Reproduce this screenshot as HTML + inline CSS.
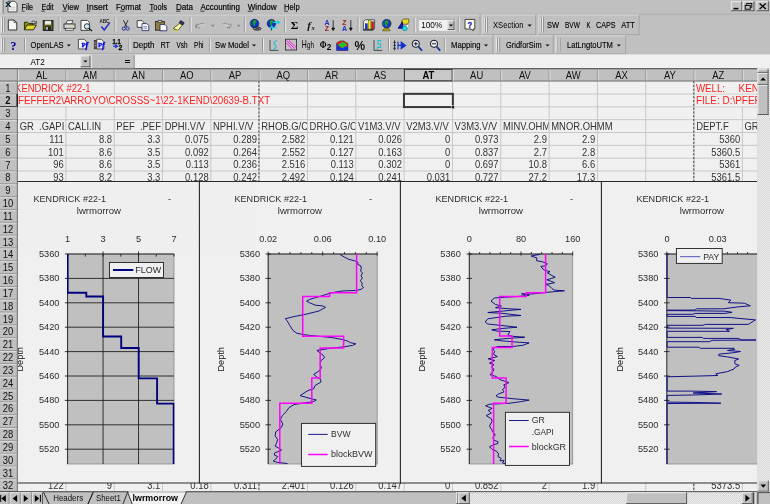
<!DOCTYPE html>
<html><head><meta charset="utf-8"><title>Microsoft Excel - lwrmorrow</title>
<style>
html,body{margin:0;padding:0;background:#c0c0c0;overflow:hidden}
svg{display:block;font-family:"Liberation Sans",sans-serif;will-change:transform;opacity:0.999}
</style></head><body>
<svg width="770" height="504" viewBox="0 0 770 504">
<rect x="0.00" y="0.00" width="770.00" height="504.00" fill="#c0c0c0"/>
<rect x="0.00" y="68.60" width="757.30" height="423.00" fill="#f0f0f0"/>
<line x1="65.92" y1="81.00" x2="65.92" y2="491.50" stroke="#c8c8c8" stroke-width="1"/>
<line x1="114.24" y1="81.00" x2="114.24" y2="491.50" stroke="#c8c8c8" stroke-width="1"/>
<line x1="162.56" y1="81.00" x2="162.56" y2="491.50" stroke="#c8c8c8" stroke-width="1"/>
<line x1="210.88" y1="81.00" x2="210.88" y2="491.50" stroke="#c8c8c8" stroke-width="1"/>
<line x1="259.20" y1="81.00" x2="259.20" y2="491.50" stroke="#c8c8c8" stroke-width="1"/>
<line x1="307.52" y1="81.00" x2="307.52" y2="491.50" stroke="#c8c8c8" stroke-width="1"/>
<line x1="355.84" y1="81.00" x2="355.84" y2="491.50" stroke="#c8c8c8" stroke-width="1"/>
<line x1="404.16" y1="81.00" x2="404.16" y2="491.50" stroke="#c8c8c8" stroke-width="1"/>
<line x1="452.48" y1="81.00" x2="452.48" y2="491.50" stroke="#c8c8c8" stroke-width="1"/>
<line x1="500.80" y1="81.00" x2="500.80" y2="491.50" stroke="#c8c8c8" stroke-width="1"/>
<line x1="549.12" y1="81.00" x2="549.12" y2="491.50" stroke="#c8c8c8" stroke-width="1"/>
<line x1="597.44" y1="81.00" x2="597.44" y2="491.50" stroke="#c8c8c8" stroke-width="1"/>
<line x1="645.76" y1="81.00" x2="645.76" y2="491.50" stroke="#c8c8c8" stroke-width="1"/>
<line x1="694.08" y1="81.00" x2="694.08" y2="491.50" stroke="#c8c8c8" stroke-width="1"/>
<line x1="742.40" y1="81.00" x2="742.40" y2="491.50" stroke="#c8c8c8" stroke-width="1"/>
<line x1="17.60" y1="94.03" x2="757.30" y2="94.03" stroke="#c8c8c8" stroke-width="1"/>
<line x1="17.60" y1="106.86" x2="757.30" y2="106.86" stroke="#c8c8c8" stroke-width="1"/>
<line x1="17.60" y1="119.69" x2="757.30" y2="119.69" stroke="#c8c8c8" stroke-width="1"/>
<line x1="17.60" y1="132.52" x2="757.30" y2="132.52" stroke="#c8c8c8" stroke-width="1"/>
<line x1="17.60" y1="145.35" x2="757.30" y2="145.35" stroke="#c8c8c8" stroke-width="1"/>
<line x1="17.60" y1="158.18" x2="757.30" y2="158.18" stroke="#c8c8c8" stroke-width="1"/>
<line x1="17.60" y1="171.01" x2="757.30" y2="171.01" stroke="#c8c8c8" stroke-width="1"/>
<line x1="17.60" y1="183.84" x2="757.30" y2="183.84" stroke="#c8c8c8" stroke-width="1"/>
<line x1="17.60" y1="196.67" x2="757.30" y2="196.67" stroke="#c8c8c8" stroke-width="1"/>
<line x1="17.60" y1="209.50" x2="757.30" y2="209.50" stroke="#c8c8c8" stroke-width="1"/>
<line x1="17.60" y1="222.33" x2="757.30" y2="222.33" stroke="#c8c8c8" stroke-width="1"/>
<line x1="17.60" y1="235.16" x2="757.30" y2="235.16" stroke="#c8c8c8" stroke-width="1"/>
<line x1="17.60" y1="247.99" x2="757.30" y2="247.99" stroke="#c8c8c8" stroke-width="1"/>
<line x1="17.60" y1="260.82" x2="757.30" y2="260.82" stroke="#c8c8c8" stroke-width="1"/>
<line x1="17.60" y1="273.65" x2="757.30" y2="273.65" stroke="#c8c8c8" stroke-width="1"/>
<line x1="17.60" y1="286.48" x2="757.30" y2="286.48" stroke="#c8c8c8" stroke-width="1"/>
<line x1="17.60" y1="299.31" x2="757.30" y2="299.31" stroke="#c8c8c8" stroke-width="1"/>
<line x1="17.60" y1="312.14" x2="757.30" y2="312.14" stroke="#c8c8c8" stroke-width="1"/>
<line x1="17.60" y1="324.97" x2="757.30" y2="324.97" stroke="#c8c8c8" stroke-width="1"/>
<line x1="17.60" y1="337.80" x2="757.30" y2="337.80" stroke="#c8c8c8" stroke-width="1"/>
<line x1="17.60" y1="350.63" x2="757.30" y2="350.63" stroke="#c8c8c8" stroke-width="1"/>
<line x1="17.60" y1="363.46" x2="757.30" y2="363.46" stroke="#c8c8c8" stroke-width="1"/>
<line x1="17.60" y1="376.29" x2="757.30" y2="376.29" stroke="#c8c8c8" stroke-width="1"/>
<line x1="17.60" y1="389.12" x2="757.30" y2="389.12" stroke="#c8c8c8" stroke-width="1"/>
<line x1="17.60" y1="401.95" x2="757.30" y2="401.95" stroke="#c8c8c8" stroke-width="1"/>
<line x1="17.60" y1="414.78" x2="757.30" y2="414.78" stroke="#c8c8c8" stroke-width="1"/>
<line x1="17.60" y1="427.61" x2="757.30" y2="427.61" stroke="#c8c8c8" stroke-width="1"/>
<line x1="17.60" y1="440.44" x2="757.30" y2="440.44" stroke="#c8c8c8" stroke-width="1"/>
<line x1="17.60" y1="453.27" x2="757.30" y2="453.27" stroke="#c8c8c8" stroke-width="1"/>
<line x1="17.60" y1="466.10" x2="757.30" y2="466.10" stroke="#c8c8c8" stroke-width="1"/>
<line x1="17.60" y1="478.93" x2="757.30" y2="478.93" stroke="#c8c8c8" stroke-width="1"/>
<rect x="18.20" y="82.00" width="95.00" height="11.43" fill="#f0f0f0"/>
<rect x="18.20" y="94.83" width="286.00" height="11.43" fill="#f0f0f0"/>
<rect x="695.00" y="82.00" width="61.00" height="11.43" fill="#f0f0f0"/>
<rect x="695.00" y="94.83" width="61.00" height="11.43" fill="#f0f0f0"/>
<text x="15.10" y="91.50" font-size="10.0" fill="#ff2020" textLength="75.50" lengthAdjust="spacingAndGlyphs">KENDRICK #22-1</text>
<text x="11.60" y="104.33" font-size="10.0" fill="#ff2020" textLength="258.50" lengthAdjust="spacingAndGlyphs">PFEFFER2\ARROYO\CROSSS~1\22-1KEND\20639-B.TXT</text>
<clipPath id="cz"><rect x="690" y="80" width="67.3" height="412"/></clipPath>
<g clip-path="url(#cz)">
<text x="696.00" y="91.50" font-size="10.0" fill="#ff2020" textLength="29.00" lengthAdjust="spacingAndGlyphs">WELL:</text>
<text x="738.50" y="91.50" font-size="10.0" fill="#ff2020">KENDRICK #22-1</text>
<text x="696.00" y="104.33" font-size="10.0" fill="#ff2020" textLength="90.00" lengthAdjust="spacingAndGlyphs">FILE: D:\PFEFFER2</text>
</g>
<clipPath id="ch0"><rect x="17.60" y="119.69" width="47.82" height="12.83"/></clipPath>
<g clip-path="url(#ch0)">
<text transform="translate(19.70,129.99) scale(0.945,1)" font-size="10.0" fill="#333333" xml:space="preserve">GR  .GAPI</text>
</g>
<clipPath id="ch1"><rect x="65.92" y="119.69" width="47.82" height="12.83"/></clipPath>
<g clip-path="url(#ch1)">
<text transform="translate(68.02,129.99) scale(0.945,1)" font-size="10.0" fill="#333333">CALI.IN</text>
</g>
<clipPath id="ch2"><rect x="114.24" y="119.69" width="47.82" height="12.83"/></clipPath>
<g clip-path="url(#ch2)">
<text transform="translate(116.34,129.99) scale(0.945,1)" font-size="10.0" fill="#333333" xml:space="preserve">PEF  .PEF</text>
</g>
<clipPath id="ch3"><rect x="162.56" y="119.69" width="47.82" height="12.83"/></clipPath>
<g clip-path="url(#ch3)">
<text transform="translate(164.66,129.99) scale(0.945,1)" font-size="10.0" fill="#333333">DPHI.V/V</text>
</g>
<clipPath id="ch4"><rect x="210.88" y="119.69" width="47.82" height="12.83"/></clipPath>
<g clip-path="url(#ch4)">
<text transform="translate(212.98,129.99) scale(0.945,1)" font-size="10.0" fill="#333333">NPHI.V/V</text>
</g>
<clipPath id="ch5"><rect x="259.20" y="119.69" width="47.82" height="12.83"/></clipPath>
<g clip-path="url(#ch5)">
<text transform="translate(261.30,129.99) scale(0.945,1)" font-size="10.0" fill="#333333">RHOB.G/C</text>
</g>
<clipPath id="ch6"><rect x="307.52" y="119.69" width="47.82" height="12.83"/></clipPath>
<g clip-path="url(#ch6)">
<text transform="translate(309.62,129.99) scale(0.945,1)" font-size="10.0" fill="#333333">DRHO.G/C</text>
</g>
<clipPath id="ch7"><rect x="355.84" y="119.69" width="47.82" height="12.83"/></clipPath>
<g clip-path="url(#ch7)">
<text transform="translate(357.94,129.99) scale(0.945,1)" font-size="10.0" fill="#333333">V1M3.V/V</text>
</g>
<clipPath id="ch8"><rect x="404.16" y="119.69" width="47.82" height="12.83"/></clipPath>
<g clip-path="url(#ch8)">
<text transform="translate(406.26,129.99) scale(0.945,1)" font-size="10.0" fill="#333333">V2M3.V/V</text>
</g>
<clipPath id="ch9"><rect x="452.48" y="119.69" width="47.82" height="12.83"/></clipPath>
<g clip-path="url(#ch9)">
<text transform="translate(454.58,129.99) scale(0.945,1)" font-size="10.0" fill="#333333">V3M3.V/V</text>
</g>
<clipPath id="ch10"><rect x="500.80" y="119.69" width="47.82" height="12.83"/></clipPath>
<g clip-path="url(#ch10)">
<text transform="translate(502.90,129.99) scale(0.945,1)" font-size="10.0" fill="#333333">MINV.OHM</text>
</g>
<text transform="translate(551.22,129.99) scale(0.945,1)" font-size="10.0" fill="#333333">MNOR.OHMM</text>
<text transform="translate(696.18,129.99) scale(0.945,1)" font-size="10.0" fill="#333333">DEPT.F</text>
<g clip-path="url(#cz)">
<text transform="translate(744.50,129.99) scale(0.945,1)" font-size="10.0" fill="#333333">GR</text>
</g>
<text transform="translate(63.72,142.82) scale(0.945,1)" font-size="10.0" fill="#333333" text-anchor="end">111</text>
<text transform="translate(112.04,142.82) scale(0.945,1)" font-size="10.0" fill="#333333" text-anchor="end">8.8</text>
<text transform="translate(160.36,142.82) scale(0.945,1)" font-size="10.0" fill="#333333" text-anchor="end">3.3</text>
<text transform="translate(208.68,142.82) scale(0.945,1)" font-size="10.0" fill="#333333" text-anchor="end">0.075</text>
<text transform="translate(257.00,142.82) scale(0.945,1)" font-size="10.0" fill="#333333" text-anchor="end">0.289</text>
<text transform="translate(305.32,142.82) scale(0.945,1)" font-size="10.0" fill="#333333" text-anchor="end">2.582</text>
<text transform="translate(353.64,142.82) scale(0.945,1)" font-size="10.0" fill="#333333" text-anchor="end">0.121</text>
<text transform="translate(401.96,142.82) scale(0.945,1)" font-size="10.0" fill="#333333" text-anchor="end">0.026</text>
<text transform="translate(450.28,142.82) scale(0.945,1)" font-size="10.0" fill="#333333" text-anchor="end">0</text>
<text transform="translate(498.60,142.82) scale(0.945,1)" font-size="10.0" fill="#333333" text-anchor="end">0.973</text>
<text transform="translate(546.92,142.82) scale(0.945,1)" font-size="10.0" fill="#333333" text-anchor="end">2.9</text>
<text transform="translate(595.24,142.82) scale(0.945,1)" font-size="10.0" fill="#333333" text-anchor="end">2.9</text>
<text transform="translate(740.20,142.82) scale(0.945,1)" font-size="10.0" fill="#333333" text-anchor="end">5360</text>
<text transform="translate(63.72,155.65) scale(0.945,1)" font-size="10.0" fill="#333333" text-anchor="end">101</text>
<text transform="translate(112.04,155.65) scale(0.945,1)" font-size="10.0" fill="#333333" text-anchor="end">8.6</text>
<text transform="translate(160.36,155.65) scale(0.945,1)" font-size="10.0" fill="#333333" text-anchor="end">3.5</text>
<text transform="translate(208.68,155.65) scale(0.945,1)" font-size="10.0" fill="#333333" text-anchor="end">0.092</text>
<text transform="translate(257.00,155.65) scale(0.945,1)" font-size="10.0" fill="#333333" text-anchor="end">0.264</text>
<text transform="translate(305.32,155.65) scale(0.945,1)" font-size="10.0" fill="#333333" text-anchor="end">2.552</text>
<text transform="translate(353.64,155.65) scale(0.945,1)" font-size="10.0" fill="#333333" text-anchor="end">0.127</text>
<text transform="translate(401.96,155.65) scale(0.945,1)" font-size="10.0" fill="#333333" text-anchor="end">0.163</text>
<text transform="translate(450.28,155.65) scale(0.945,1)" font-size="10.0" fill="#333333" text-anchor="end">0</text>
<text transform="translate(498.60,155.65) scale(0.945,1)" font-size="10.0" fill="#333333" text-anchor="end">0.837</text>
<text transform="translate(546.92,155.65) scale(0.945,1)" font-size="10.0" fill="#333333" text-anchor="end">2.7</text>
<text transform="translate(595.24,155.65) scale(0.945,1)" font-size="10.0" fill="#333333" text-anchor="end">2.8</text>
<text transform="translate(740.20,155.65) scale(0.945,1)" font-size="10.0" fill="#333333" text-anchor="end">5360.5</text>
<text transform="translate(63.72,168.48) scale(0.945,1)" font-size="10.0" fill="#333333" text-anchor="end">96</text>
<text transform="translate(112.04,168.48) scale(0.945,1)" font-size="10.0" fill="#333333" text-anchor="end">8.6</text>
<text transform="translate(160.36,168.48) scale(0.945,1)" font-size="10.0" fill="#333333" text-anchor="end">3.5</text>
<text transform="translate(208.68,168.48) scale(0.945,1)" font-size="10.0" fill="#333333" text-anchor="end">0.113</text>
<text transform="translate(257.00,168.48) scale(0.945,1)" font-size="10.0" fill="#333333" text-anchor="end">0.236</text>
<text transform="translate(305.32,168.48) scale(0.945,1)" font-size="10.0" fill="#333333" text-anchor="end">2.516</text>
<text transform="translate(353.64,168.48) scale(0.945,1)" font-size="10.0" fill="#333333" text-anchor="end">0.113</text>
<text transform="translate(401.96,168.48) scale(0.945,1)" font-size="10.0" fill="#333333" text-anchor="end">0.302</text>
<text transform="translate(450.28,168.48) scale(0.945,1)" font-size="10.0" fill="#333333" text-anchor="end">0</text>
<text transform="translate(498.60,168.48) scale(0.945,1)" font-size="10.0" fill="#333333" text-anchor="end">0.697</text>
<text transform="translate(546.92,168.48) scale(0.945,1)" font-size="10.0" fill="#333333" text-anchor="end">10.8</text>
<text transform="translate(595.24,168.48) scale(0.945,1)" font-size="10.0" fill="#333333" text-anchor="end">6.6</text>
<text transform="translate(740.20,168.48) scale(0.945,1)" font-size="10.0" fill="#333333" text-anchor="end">5361</text>
<text transform="translate(63.72,181.31) scale(0.945,1)" font-size="10.0" fill="#333333" text-anchor="end">93</text>
<text transform="translate(112.04,181.31) scale(0.945,1)" font-size="10.0" fill="#333333" text-anchor="end">8.2</text>
<text transform="translate(160.36,181.31) scale(0.945,1)" font-size="10.0" fill="#333333" text-anchor="end">3.3</text>
<text transform="translate(208.68,181.31) scale(0.945,1)" font-size="10.0" fill="#333333" text-anchor="end">0.128</text>
<text transform="translate(257.00,181.31) scale(0.945,1)" font-size="10.0" fill="#333333" text-anchor="end">0.242</text>
<text transform="translate(305.32,181.31) scale(0.945,1)" font-size="10.0" fill="#333333" text-anchor="end">2.492</text>
<text transform="translate(353.64,181.31) scale(0.945,1)" font-size="10.0" fill="#333333" text-anchor="end">0.124</text>
<text transform="translate(401.96,181.31) scale(0.945,1)" font-size="10.0" fill="#333333" text-anchor="end">0.241</text>
<text transform="translate(450.28,181.31) scale(0.945,1)" font-size="10.0" fill="#333333" text-anchor="end">0.031</text>
<text transform="translate(498.60,181.31) scale(0.945,1)" font-size="10.0" fill="#333333" text-anchor="end">0.727</text>
<text transform="translate(546.92,181.31) scale(0.945,1)" font-size="10.0" fill="#333333" text-anchor="end">27.2</text>
<text transform="translate(595.24,181.31) scale(0.945,1)" font-size="10.0" fill="#333333" text-anchor="end">17.3</text>
<text transform="translate(740.20,181.31) scale(0.945,1)" font-size="10.0" fill="#333333" text-anchor="end">5361.5</text>
<text transform="translate(63.72,489.23) scale(0.945,1)" font-size="10.0" fill="#333333" text-anchor="end">122</text>
<text transform="translate(112.04,489.23) scale(0.945,1)" font-size="10.0" fill="#333333" text-anchor="end">9</text>
<text transform="translate(160.36,489.23) scale(0.945,1)" font-size="10.0" fill="#333333" text-anchor="end">3.1</text>
<text transform="translate(208.68,489.23) scale(0.945,1)" font-size="10.0" fill="#333333" text-anchor="end">0.18</text>
<text transform="translate(257.00,489.23) scale(0.945,1)" font-size="10.0" fill="#333333" text-anchor="end">0.311</text>
<text transform="translate(305.32,489.23) scale(0.945,1)" font-size="10.0" fill="#333333" text-anchor="end">2.401</text>
<text transform="translate(353.64,489.23) scale(0.945,1)" font-size="10.0" fill="#333333" text-anchor="end">0.126</text>
<text transform="translate(401.96,489.23) scale(0.945,1)" font-size="10.0" fill="#333333" text-anchor="end">0.147</text>
<text transform="translate(450.28,489.23) scale(0.945,1)" font-size="10.0" fill="#333333" text-anchor="end">0</text>
<text transform="translate(498.60,489.23) scale(0.945,1)" font-size="10.0" fill="#333333" text-anchor="end">0.852</text>
<text transform="translate(546.92,489.23) scale(0.945,1)" font-size="10.0" fill="#333333" text-anchor="end">2</text>
<text transform="translate(595.24,489.23) scale(0.945,1)" font-size="10.0" fill="#333333" text-anchor="end">1.9</text>
<text transform="translate(740.20,489.23) scale(0.945,1)" font-size="10.0" fill="#333333" text-anchor="end">5373.5</text>
<line x1="258.90" y1="81.00" x2="258.90" y2="491.50" stroke="#303030" stroke-width="0.9" stroke-dasharray="2.2 1.6"/>
<line x1="693.78" y1="81.00" x2="693.78" y2="491.50" stroke="#303030" stroke-width="0.9" stroke-dasharray="2.2 1.6"/>
<rect x="403.96" y="93.83" width="48.92" height="13.23" fill="none" stroke="#383838" stroke-width="2.0"/>
<rect x="451.28" y="105.66" width="3.20" height="3.20" fill="#202020" stroke="#f0f0f0" stroke-width="0.6"/>
<clipPath id="cc"><rect x="17.6" y="170" width="739.7" height="320"/></clipPath>
<g clip-path="url(#cc)">
<rect x="-1.60" y="181.50" width="201.00" height="301.50" fill="#f0f0f0" stroke="#202020" stroke-width="0.95"/>
<text x="33.50" y="201.70" font-size="9.2" fill="#2c2c2c" textLength="72.60" lengthAdjust="spacingAndGlyphs">KENDRICK #22-1</text>
<text x="168.00" y="201.70" font-size="9.2" fill="#2c2c2c">-</text>
<text x="76.80" y="214.40" font-size="9.2" fill="#2c2c2c" textLength="44.20" lengthAdjust="spacingAndGlyphs">lwrmorrow</text>
<text transform="translate(22.80,359.30) rotate(-90)" font-size="9.2" fill="#101010" text-anchor="middle" textLength="24.6" lengthAdjust="spacingAndGlyphs">Depth</text>
<rect x="67.60" y="254.00" width="106.40" height="210.00" fill="#c0c0c0" stroke="#8a8a8a" stroke-width="0.8"/>
<text x="67.60" y="242.30" font-size="9.2" fill="#2c2c2c" text-anchor="middle">1</text>
<text x="103.07" y="242.30" font-size="9.2" fill="#2c2c2c" text-anchor="middle">3</text>
<text x="138.54" y="242.30" font-size="9.2" fill="#2c2c2c" text-anchor="middle">5</text>
<text x="174.01" y="242.30" font-size="9.2" fill="#2c2c2c" text-anchor="middle">7</text>
<text x="59.40" y="257.00" font-size="9.2" fill="#2c2c2c" text-anchor="end">5360</text>
<text x="59.40" y="281.40" font-size="9.2" fill="#2c2c2c" text-anchor="end">5380</text>
<text x="59.40" y="305.80" font-size="9.2" fill="#2c2c2c" text-anchor="end">5400</text>
<text x="59.40" y="330.20" font-size="9.2" fill="#2c2c2c" text-anchor="end">5420</text>
<text x="59.40" y="354.60" font-size="9.2" fill="#2c2c2c" text-anchor="end">5440</text>
<text x="59.40" y="379.00" font-size="9.2" fill="#2c2c2c" text-anchor="end">5460</text>
<text x="59.40" y="403.40" font-size="9.2" fill="#2c2c2c" text-anchor="end">5480</text>
<text x="59.40" y="427.80" font-size="9.2" fill="#2c2c2c" text-anchor="end">5500</text>
<text x="59.40" y="452.20" font-size="9.2" fill="#2c2c2c" text-anchor="end">5520</text>
<line x1="64.90" y1="254.00" x2="174.00" y2="254.00" stroke="#202020" stroke-width="0.9"/>
<line x1="64.90" y1="278.40" x2="174.00" y2="278.40" stroke="#202020" stroke-width="0.9"/>
<line x1="64.90" y1="302.80" x2="174.00" y2="302.80" stroke="#202020" stroke-width="0.9"/>
<line x1="64.90" y1="327.20" x2="174.00" y2="327.20" stroke="#202020" stroke-width="0.9"/>
<line x1="64.90" y1="351.60" x2="174.00" y2="351.60" stroke="#202020" stroke-width="0.9"/>
<line x1="64.90" y1="376.00" x2="174.00" y2="376.00" stroke="#202020" stroke-width="0.9"/>
<line x1="64.90" y1="400.40" x2="174.00" y2="400.40" stroke="#202020" stroke-width="0.9"/>
<line x1="64.90" y1="424.80" x2="174.00" y2="424.80" stroke="#202020" stroke-width="0.9"/>
<line x1="64.90" y1="449.20" x2="174.00" y2="449.20" stroke="#202020" stroke-width="0.9"/>
<line x1="103.07" y1="251.40" x2="103.07" y2="464.00" stroke="#202020" stroke-width="0.9"/>
<line x1="138.54" y1="251.40" x2="138.54" y2="464.00" stroke="#202020" stroke-width="0.9"/>
<line x1="67.60" y1="254.00" x2="67.60" y2="464.00" stroke="#202020" stroke-width="0.9"/>
<line x1="67.60" y1="254.00" x2="67.60" y2="256.60" stroke="#202020" stroke-width="0.9"/>
<line x1="85.33" y1="254.00" x2="85.33" y2="256.60" stroke="#202020" stroke-width="0.9"/>
<line x1="103.06" y1="254.00" x2="103.06" y2="256.60" stroke="#202020" stroke-width="0.9"/>
<line x1="120.79" y1="254.00" x2="120.79" y2="256.60" stroke="#202020" stroke-width="0.9"/>
<line x1="138.52" y1="254.00" x2="138.52" y2="256.60" stroke="#202020" stroke-width="0.9"/>
<line x1="156.25" y1="254.00" x2="156.25" y2="256.60" stroke="#202020" stroke-width="0.9"/>
<line x1="173.98" y1="254.00" x2="173.98" y2="256.60" stroke="#202020" stroke-width="0.9"/>
<clipPath id="cf"><rect x="67.0" y="253.4" width="107.5" height="211"/></clipPath>
<path d="M67.6,254.0 V292.7 H86.3 V296.5 H103.1 V336.5 H121.2 V348 H138.7 V378.4 H157.1 V403.6 H173.7 V464.0" stroke="#000080" fill="none" stroke-width="1.9" stroke-linejoin="miter" clip-path="url(#cf)"/>
<rect x="109.50" y="262.50" width="54.00" height="15.00" fill="#f0f0f0" stroke="#202020" stroke-width="0.9"/>
<line x1="113.00" y1="270.00" x2="133.30" y2="270.00" stroke="#000080" stroke-width="1.9"/>
<text x="135.30" y="273.30" font-size="9.2" fill="#2c2c2c" textLength="25.80" lengthAdjust="spacingAndGlyphs">FLOW</text>
<rect x="199.40" y="181.50" width="201.00" height="301.50" fill="#f0f0f0" stroke="#202020" stroke-width="0.95"/>
<text x="234.50" y="201.70" font-size="9.2" fill="#2c2c2c" textLength="72.60" lengthAdjust="spacingAndGlyphs">KENDRICK #22-1</text>
<text x="369.00" y="201.70" font-size="9.2" fill="#2c2c2c">-</text>
<text x="277.80" y="214.40" font-size="9.2" fill="#2c2c2c" textLength="44.20" lengthAdjust="spacingAndGlyphs">lwrmorrow</text>
<text transform="translate(224.10,359.30) rotate(-90)" font-size="9.2" fill="#101010" text-anchor="middle" textLength="24.6" lengthAdjust="spacingAndGlyphs">Depth</text>
<rect x="268.20" y="254.00" width="109.00" height="210.00" fill="#c0c0c0" stroke="#8a8a8a" stroke-width="0.8"/>
<text x="268.20" y="242.30" font-size="9.2" fill="#2c2c2c" text-anchor="middle">0.02</text>
<text x="322.70" y="242.30" font-size="9.2" fill="#2c2c2c" text-anchor="middle">0.06</text>
<text x="377.20" y="242.30" font-size="9.2" fill="#2c2c2c" text-anchor="middle">0.10</text>
<text x="260.10" y="257.00" font-size="9.2" fill="#2c2c2c" text-anchor="end">5360</text>
<text x="260.10" y="281.40" font-size="9.2" fill="#2c2c2c" text-anchor="end">5380</text>
<text x="260.10" y="305.80" font-size="9.2" fill="#2c2c2c" text-anchor="end">5400</text>
<text x="260.10" y="330.20" font-size="9.2" fill="#2c2c2c" text-anchor="end">5420</text>
<text x="260.10" y="354.60" font-size="9.2" fill="#2c2c2c" text-anchor="end">5440</text>
<text x="260.10" y="379.00" font-size="9.2" fill="#2c2c2c" text-anchor="end">5460</text>
<text x="260.10" y="403.40" font-size="9.2" fill="#2c2c2c" text-anchor="end">5480</text>
<text x="260.10" y="427.80" font-size="9.2" fill="#2c2c2c" text-anchor="end">5500</text>
<text x="260.10" y="452.20" font-size="9.2" fill="#2c2c2c" text-anchor="end">5520</text>
<line x1="268.20" y1="253.80" x2="268.20" y2="464.00" stroke="#202020" stroke-width="0.9"/>
<line x1="268.20" y1="254.00" x2="377.20" y2="254.00" stroke="#202020" stroke-width="0.9"/>
<line x1="265.50" y1="254.00" x2="270.90" y2="254.00" stroke="#202020" stroke-width="0.9"/>
<line x1="265.50" y1="278.40" x2="270.90" y2="278.40" stroke="#202020" stroke-width="0.9"/>
<line x1="265.50" y1="302.80" x2="270.90" y2="302.80" stroke="#202020" stroke-width="0.9"/>
<line x1="265.50" y1="327.20" x2="270.90" y2="327.20" stroke="#202020" stroke-width="0.9"/>
<line x1="265.50" y1="351.60" x2="270.90" y2="351.60" stroke="#202020" stroke-width="0.9"/>
<line x1="265.50" y1="376.00" x2="270.90" y2="376.00" stroke="#202020" stroke-width="0.9"/>
<line x1="265.50" y1="400.40" x2="270.90" y2="400.40" stroke="#202020" stroke-width="0.9"/>
<line x1="265.50" y1="424.80" x2="270.90" y2="424.80" stroke="#202020" stroke-width="0.9"/>
<line x1="265.50" y1="449.20" x2="270.90" y2="449.20" stroke="#202020" stroke-width="0.9"/>
<line x1="268.20" y1="251.60" x2="268.20" y2="255.60" stroke="#202020" stroke-width="0.9"/>
<line x1="279.10" y1="252.10" x2="279.10" y2="254.00" stroke="#202020" stroke-width="0.9"/>
<line x1="290.00" y1="252.10" x2="290.00" y2="254.00" stroke="#202020" stroke-width="0.9"/>
<line x1="300.90" y1="252.10" x2="300.90" y2="254.00" stroke="#202020" stroke-width="0.9"/>
<line x1="311.80" y1="252.10" x2="311.80" y2="254.00" stroke="#202020" stroke-width="0.9"/>
<line x1="322.70" y1="251.60" x2="322.70" y2="255.60" stroke="#202020" stroke-width="0.9"/>
<line x1="333.60" y1="252.10" x2="333.60" y2="254.00" stroke="#202020" stroke-width="0.9"/>
<line x1="344.50" y1="252.10" x2="344.50" y2="254.00" stroke="#202020" stroke-width="0.9"/>
<line x1="355.40" y1="252.10" x2="355.40" y2="254.00" stroke="#202020" stroke-width="0.9"/>
<line x1="366.30" y1="252.10" x2="366.30" y2="254.00" stroke="#202020" stroke-width="0.9"/>
<line x1="377.20" y1="251.60" x2="377.20" y2="255.60" stroke="#202020" stroke-width="0.9"/>
<path d="M340.3,254.7 L344.8,257.3 L348.7,259.3 L354.5,260.8 L357.8,262.1 L357.8,264.5 L360.8,265.8 L361.3,269 L360.4,271 L362.6,272.9 L361,275.5 L362.3,278.1 L360.4,280.7 L362.3,283.3 L361.7,285.3 L363.4,287.6 L361,289.4 L355.8,290.5 L344.2,290.9 L338.4,291.5 L329.4,293.4 L319,296.7 L309.9,299.3 L306.6,301.2 L309.9,302.9 L315.1,305.1 L322.9,306 L325.5,307.3 L319,311 L306,314.2 L293,316.8 L285.2,318.8 L287.1,320.7 L289.7,325.3 L293,330.5 L296.9,333.3 L306,335 L319,336.3 L331.9,337.6 L342.3,339.5 L347.5,341.1 L350.8,342.8 L355.8,343.8 L352.7,345.4 L344.9,346.7 L329.9,348.4 L316.9,350.4 L320.2,353 L322.8,354.9 L324.7,357.5 L320.8,360.8 L320.2,364.7 L321.5,367.9 L318.9,371.2 L313.7,374.4 L316.9,377 L320.8,379.6 L320.8,382.2 L315,385.5 L313.7,388.7 L307.9,390.6 L300.1,395.6 L307.9,397.8 L316.3,400 L313,401.7 L304,403 L294,404.5 L288.8,407.8 L286.2,411.7 L282.3,415.6 L280.3,419.5 L282.9,424 L281,427.9 L275.8,431.8 L275.1,435.7 L277.7,439.6 L276.4,443.5 L275.1,446.1 L279.7,448.7 L281.6,450 L274.5,453.2 L274.5,455.2 L277.7,456.5 L275.8,459.1 L273.2,461 L277.1,462.3 L287.5,463.6" stroke="#000080" fill="none" stroke-width="0.9" stroke-linejoin="round"/>
<path d="M356.6,254 V292.8 H329.6 V296.4 H302.7 V336.3 H343.6 V347.9 H320.2 V377.9 H311.8 V403.3 H279.8 V464" stroke="#ff00ff" fill="none" stroke-width="1.5"/>
<rect x="301.50" y="423.40" width="74.20" height="43.00" fill="#f0f0f0" stroke="#202020" stroke-width="0.9"/>
<line x1="308.20" y1="434.40" x2="327.70" y2="434.40" stroke="#000080" stroke-width="0.9"/>
<text x="331.00" y="437.00" font-size="9.2" fill="#2c2c2c" textLength="19.50" lengthAdjust="spacingAndGlyphs">BVW</text>
<line x1="308.20" y1="454.50" x2="327.70" y2="454.50" stroke="#ff00ff" stroke-width="1.5"/>
<text x="331.00" y="457.30" font-size="9.2" fill="#2c2c2c" textLength="41.50" lengthAdjust="spacingAndGlyphs">blockBVW</text>
<rect x="400.40" y="181.50" width="201.00" height="301.50" fill="#f0f0f0" stroke="#202020" stroke-width="0.95"/>
<text x="435.50" y="201.70" font-size="9.2" fill="#2c2c2c" textLength="72.60" lengthAdjust="spacingAndGlyphs">KENDRICK #22-1</text>
<text x="570.00" y="201.70" font-size="9.2" fill="#2c2c2c">-</text>
<text x="478.80" y="214.40" font-size="9.2" fill="#2c2c2c" textLength="44.20" lengthAdjust="spacingAndGlyphs">lwrmorrow</text>
<text transform="translate(425.10,359.30) rotate(-90)" font-size="9.2" fill="#101010" text-anchor="middle" textLength="24.6" lengthAdjust="spacingAndGlyphs">Depth</text>
<rect x="469.30" y="254.00" width="103.40" height="210.00" fill="#c0c0c0" stroke="#8a8a8a" stroke-width="0.8"/>
<text x="469.30" y="242.30" font-size="9.2" fill="#2c2c2c" text-anchor="middle">0</text>
<text x="521.00" y="242.30" font-size="9.2" fill="#2c2c2c" text-anchor="middle">80</text>
<text x="572.70" y="242.30" font-size="9.2" fill="#2c2c2c" text-anchor="middle">160</text>
<text x="460.80" y="257.00" font-size="9.2" fill="#2c2c2c" text-anchor="end">5360</text>
<text x="460.80" y="281.40" font-size="9.2" fill="#2c2c2c" text-anchor="end">5380</text>
<text x="460.80" y="305.80" font-size="9.2" fill="#2c2c2c" text-anchor="end">5400</text>
<text x="460.80" y="330.20" font-size="9.2" fill="#2c2c2c" text-anchor="end">5420</text>
<text x="460.80" y="354.60" font-size="9.2" fill="#2c2c2c" text-anchor="end">5440</text>
<text x="460.80" y="379.00" font-size="9.2" fill="#2c2c2c" text-anchor="end">5460</text>
<text x="460.80" y="403.40" font-size="9.2" fill="#2c2c2c" text-anchor="end">5480</text>
<text x="460.80" y="427.80" font-size="9.2" fill="#2c2c2c" text-anchor="end">5500</text>
<text x="460.80" y="452.20" font-size="9.2" fill="#2c2c2c" text-anchor="end">5520</text>
<line x1="469.30" y1="253.80" x2="469.30" y2="464.00" stroke="#202020" stroke-width="0.9"/>
<line x1="469.30" y1="254.00" x2="572.70" y2="254.00" stroke="#202020" stroke-width="0.9"/>
<line x1="466.60" y1="254.00" x2="472.00" y2="254.00" stroke="#202020" stroke-width="0.9"/>
<line x1="466.60" y1="278.40" x2="472.00" y2="278.40" stroke="#202020" stroke-width="0.9"/>
<line x1="466.60" y1="302.80" x2="472.00" y2="302.80" stroke="#202020" stroke-width="0.9"/>
<line x1="466.60" y1="327.20" x2="472.00" y2="327.20" stroke="#202020" stroke-width="0.9"/>
<line x1="466.60" y1="351.60" x2="472.00" y2="351.60" stroke="#202020" stroke-width="0.9"/>
<line x1="466.60" y1="376.00" x2="472.00" y2="376.00" stroke="#202020" stroke-width="0.9"/>
<line x1="466.60" y1="400.40" x2="472.00" y2="400.40" stroke="#202020" stroke-width="0.9"/>
<line x1="466.60" y1="424.80" x2="472.00" y2="424.80" stroke="#202020" stroke-width="0.9"/>
<line x1="466.60" y1="449.20" x2="472.00" y2="449.20" stroke="#202020" stroke-width="0.9"/>
<line x1="469.30" y1="251.60" x2="469.30" y2="255.60" stroke="#202020" stroke-width="0.9"/>
<line x1="479.64" y1="252.10" x2="479.64" y2="254.00" stroke="#202020" stroke-width="0.9"/>
<line x1="489.98" y1="252.10" x2="489.98" y2="254.00" stroke="#202020" stroke-width="0.9"/>
<line x1="500.32" y1="252.10" x2="500.32" y2="254.00" stroke="#202020" stroke-width="0.9"/>
<line x1="510.66" y1="252.10" x2="510.66" y2="254.00" stroke="#202020" stroke-width="0.9"/>
<line x1="521.00" y1="251.60" x2="521.00" y2="255.60" stroke="#202020" stroke-width="0.9"/>
<line x1="531.34" y1="252.10" x2="531.34" y2="254.00" stroke="#202020" stroke-width="0.9"/>
<line x1="541.68" y1="252.10" x2="541.68" y2="254.00" stroke="#202020" stroke-width="0.9"/>
<line x1="552.02" y1="252.10" x2="552.02" y2="254.00" stroke="#202020" stroke-width="0.9"/>
<line x1="562.36" y1="252.10" x2="562.36" y2="254.00" stroke="#202020" stroke-width="0.9"/>
<line x1="572.70" y1="251.60" x2="572.70" y2="255.60" stroke="#202020" stroke-width="0.9"/>
<path d="M540.3,254.3 L531.2,256.0 L537.0,258.0 L536.4,260.6 L542.9,261.9 L547.4,263.8 L545.5,265.8 L540.9,266.4 L542.9,269.0 L544.8,270.3 L550.0,271.6 L547.4,272.9 L551.9,275.5 L555.2,277.2 L551.3,278.5 L546.8,279.8 L550.6,281.1 L554.5,282.7 L550.0,283.7 L546.1,284.2 L549.4,285.9 L551.9,288.5 L554.5,290.2 L564.4,290.8 L555.8,291.5 L546.1,292.4 L531.2,294.1 L521.6,293.8 L529.4,295.1 L519.0,296.4 L504.7,297.3 L494.3,298.0 L491.0,301.2 L495.6,304.5 L501.4,306.0 L495.6,307.7 L506.0,308.6 L520.9,309.4 L503.4,311.0 L487.8,312.5 L502.0,313.3 L520.9,315.5 L506.0,316.2 L487.8,318.8 L485.2,322.0 L487.8,324.0 L502.0,325.5 L517.0,327.2 L502.0,328.5 L491.7,329.8 L496.9,331.1 L509.9,331.5 L507.9,335.0 L512.5,336.3 L524.8,337.2 L506.0,338.5 L494.3,339.8 L502.0,340.8 L514.0,341.9 L529.1,342.9 L523.2,345.2 L512.9,346.5 L497.9,346.5 L492.7,348.4 L494.7,351.7 L493.4,354.3 L497.3,356.6 L488.2,358.8 L494.7,360.5 L489.5,363.1 L494.0,364.7 L491.4,367.0 L494.0,369.2 L492.7,371.8 L490.1,374.8 L496.0,376.4 L499.9,379.6 L505.1,381.3 L509.0,382.6 L503.8,384.8 L505.1,387.4 L502.5,389.4 L504.0,391.9 L498.6,393.9 L496.0,395.8 L497.9,397.1 L512.9,398.7 L529.1,400.1 L520.6,401.7 L509.0,403.3 L496.0,403.9 L489.5,404.2 L485.6,405.8 L492.1,408.4 L488.2,410.4 L491.4,413.0 L486.2,415.6 L491.4,418.8 L492.1,421.4 L489.5,426.0 L491.4,429.2 L493.4,432.5 L495.3,435.1 L492.7,437.7 L494.0,440.3 L497.9,441.6 L497.9,443.5 L493.4,444.8 L489.5,446.8 L492.1,449.4 L496.6,451.3 L498.6,453.9 L497.9,456.5 L501.2,458.4 L499.9,460.8 L504.0,460.4 L502.5,463.0 L505.0,463.6" stroke="#000080" fill="none" stroke-width="0.9" stroke-linejoin="round"/>
<path d="M545.6,254 V292.8 H526.2 V296.4 H499.7 V336.1 H512 V347.6 H492.3 V377.9 H506.1 V403.3 H493.6 V464" stroke="#ff00ff" fill="none" stroke-width="1.5"/>
<rect x="505.40" y="412.30" width="64.10" height="53.10" fill="#f0f0f0" stroke="#202020" stroke-width="0.9"/>
<line x1="509.00" y1="420.50" x2="528.70" y2="420.50" stroke="#000080" stroke-width="0.9"/>
<text x="531.70" y="423.20" font-size="9.2" fill="#2c2c2c" textLength="13.00" lengthAdjust="spacingAndGlyphs">GR</text>
<text x="531.70" y="434.60" font-size="9.2" fill="#2c2c2c" textLength="22.20" lengthAdjust="spacingAndGlyphs">.GAPI</text>
<line x1="509.00" y1="446.50" x2="528.70" y2="446.50" stroke="#ff00ff" stroke-width="1.5"/>
<text x="531.70" y="449.60" font-size="9.2" fill="#2c2c2c" textLength="34.40" lengthAdjust="spacingAndGlyphs">blockGR</text>
<rect x="601.40" y="181.50" width="200.60" height="301.50" fill="#f0f0f0" stroke="#202020" stroke-width="0.95"/>
<text x="636.50" y="201.70" font-size="9.2" fill="#2c2c2c" textLength="72.60" lengthAdjust="spacingAndGlyphs">KENDRICK #22-1</text>
<text x="771.00" y="201.70" font-size="9.2" fill="#2c2c2c">-</text>
<text x="679.80" y="214.40" font-size="9.2" fill="#2c2c2c" textLength="44.20" lengthAdjust="spacingAndGlyphs">lwrmorrow</text>
<text transform="translate(623.00,359.30) rotate(-90)" font-size="9.2" fill="#101010" text-anchor="middle" textLength="24.6" lengthAdjust="spacingAndGlyphs">Depth</text>
<rect x="666.80" y="254.00" width="133.20" height="210.00" fill="#c0c0c0" stroke="#8a8a8a" stroke-width="0.8"/>
<text x="667.10" y="242.30" font-size="9.2" fill="#2c2c2c" text-anchor="middle">0</text>
<text x="717.70" y="242.30" font-size="9.2" fill="#2c2c2c" text-anchor="middle">0.03</text>
<text x="768.30" y="242.30" font-size="9.2" fill="#2c2c2c" text-anchor="middle">0.06</text>
<text x="658.40" y="257.00" font-size="9.2" fill="#2c2c2c" text-anchor="end">5360</text>
<text x="658.40" y="281.40" font-size="9.2" fill="#2c2c2c" text-anchor="end">5380</text>
<text x="658.40" y="305.80" font-size="9.2" fill="#2c2c2c" text-anchor="end">5400</text>
<text x="658.40" y="330.20" font-size="9.2" fill="#2c2c2c" text-anchor="end">5420</text>
<text x="658.40" y="354.60" font-size="9.2" fill="#2c2c2c" text-anchor="end">5440</text>
<text x="658.40" y="379.00" font-size="9.2" fill="#2c2c2c" text-anchor="end">5460</text>
<text x="658.40" y="403.40" font-size="9.2" fill="#2c2c2c" text-anchor="end">5480</text>
<text x="658.40" y="427.80" font-size="9.2" fill="#2c2c2c" text-anchor="end">5500</text>
<text x="658.40" y="452.20" font-size="9.2" fill="#2c2c2c" text-anchor="end">5520</text>
<line x1="666.80" y1="254.00" x2="666.80" y2="464.00" stroke="#303030" stroke-width="0.9"/>
<line x1="666.80" y1="254.00" x2="757.30" y2="254.00" stroke="#202020" stroke-width="0.9"/>
<line x1="664.10" y1="254.00" x2="669.50" y2="254.00" stroke="#202020" stroke-width="0.9"/>
<line x1="664.10" y1="278.40" x2="669.50" y2="278.40" stroke="#202020" stroke-width="0.9"/>
<line x1="664.10" y1="302.80" x2="669.50" y2="302.80" stroke="#202020" stroke-width="0.9"/>
<line x1="664.10" y1="327.20" x2="669.50" y2="327.20" stroke="#202020" stroke-width="0.9"/>
<line x1="664.10" y1="351.60" x2="669.50" y2="351.60" stroke="#202020" stroke-width="0.9"/>
<line x1="664.10" y1="376.00" x2="669.50" y2="376.00" stroke="#202020" stroke-width="0.9"/>
<line x1="664.10" y1="400.40" x2="669.50" y2="400.40" stroke="#202020" stroke-width="0.9"/>
<line x1="664.10" y1="424.80" x2="669.50" y2="424.80" stroke="#202020" stroke-width="0.9"/>
<line x1="664.10" y1="449.20" x2="669.50" y2="449.20" stroke="#202020" stroke-width="0.9"/>
<line x1="666.80" y1="251.60" x2="666.80" y2="255.60" stroke="#202020" stroke-width="0.9"/>
<line x1="676.90" y1="252.10" x2="676.90" y2="254.00" stroke="#202020" stroke-width="0.9"/>
<line x1="687.00" y1="252.10" x2="687.00" y2="254.00" stroke="#202020" stroke-width="0.9"/>
<line x1="697.10" y1="252.10" x2="697.10" y2="254.00" stroke="#202020" stroke-width="0.9"/>
<line x1="707.20" y1="252.10" x2="707.20" y2="254.00" stroke="#202020" stroke-width="0.9"/>
<line x1="717.30" y1="251.60" x2="717.30" y2="255.60" stroke="#202020" stroke-width="0.9"/>
<line x1="727.40" y1="252.10" x2="727.40" y2="254.00" stroke="#202020" stroke-width="0.9"/>
<line x1="737.50" y1="252.10" x2="737.50" y2="254.00" stroke="#202020" stroke-width="0.9"/>
<line x1="747.60" y1="252.10" x2="747.60" y2="254.00" stroke="#202020" stroke-width="0.9"/>
<path d="M667.0999999999999,254 L667.0999999999999,297.5 L690.5,297.5 L691.2,298.4 L719.1,298.4 L730.8,300.1 L728.2,302.7 L744.4,303.2 L750.3,305.8 L737.9,306.9 L723.6,308.8 L696.4,308.8 L695.1,310.1 L667.0999999999999,310.1 L667.0999999999999,310.6 L696.4,310.8 L724.9,311.2 L732.1,312.3 L724.9,313.4 L695.1,313.4 L692.5,314.3 L667.0999999999999,314.3 L667.0999999999999,316.4 L695.1,316.4 L696.4,317.5 L730.1,317.5 L737.9,318.3 L755.5,319.9 L748.3,324.4 L705.5,324.4 L702.9,325.3 L667.0999999999999,325.3 L667.0999999999999,328.1 L733.4,328.3 L726.2,329.6 L729.5,331.3 L667.0999999999999,331.3 L667.0999999999999,337.4 L702.2,337.4 L703.5,338.4 L737.9,338.4 L741.8,340 L756,340 L712,340.3 L709.4,341.7 L667.0999999999999,341.7 L667.0999999999999,347.2 L698.8,347.2 L700.3,348.3 L734,348.3 L734.7,349.4 L727.5,350.5 L740.5,351.5 L732.7,352.8 L719.1,354.1 L718.4,355.6 L727.5,356.9 L738.6,359 L734.7,360.6 L735,363.8 L739.2,365.4 L735.3,367.1 L734,369 L727.5,371.6 L715.8,373.8 L717.8,375.5 L692.5,376.2 L667.0999999999999,376.8 L667.0999999999999,391.1 L691.2,391.1 L716.5,391.6 L693.1,393 L721.7,394 L693.1,395 L667.0999999999999,395.4 L667.0999999999999,402.1 L693.1,402.4 L720.8,403.2 L667.0999999999999,403.5 L667.0999999999999,464" stroke="#101088" fill="none" stroke-width="1.0" stroke-linejoin="round"/>
<rect x="676.40" y="248.50" width="45.80" height="14.90" fill="#f0f0f0" stroke="#202020" stroke-width="0.9"/>
<line x1="680.10" y1="256.70" x2="700.20" y2="256.70" stroke="#5050b8" stroke-width="1.0"/>
<text x="703.20" y="259.60" font-size="9.2" fill="#2c2c2c" textLength="16.00" lengthAdjust="spacingAndGlyphs">PAY</text>
</g>
<rect x="0.00" y="68.60" width="17.60" height="423.00" fill="#c0c0c0"/>
<line x1="0.00" y1="82.10" x2="17.00" y2="82.10" stroke="#e4e4e4" stroke-width="0.8"/>
<text transform="translate(7.90,91.60) scale(0.945,1)" font-size="10.0" fill="#101010" text-anchor="middle">1</text>
<line x1="0.00" y1="94.03" x2="17.60" y2="94.03" stroke="#8c8c8c" stroke-width="0.9"/>
<line x1="0.00" y1="94.93" x2="17.00" y2="94.93" stroke="#e4e4e4" stroke-width="0.8"/>
<text transform="translate(7.90,104.43) scale(0.945,1)" font-size="10.0" fill="#101010" text-anchor="middle" font-weight="bold">2</text>
<line x1="0.00" y1="106.86" x2="17.60" y2="106.86" stroke="#8c8c8c" stroke-width="0.9"/>
<line x1="0.00" y1="107.76" x2="17.00" y2="107.76" stroke="#e4e4e4" stroke-width="0.8"/>
<text transform="translate(7.90,117.26) scale(0.945,1)" font-size="10.0" fill="#101010" text-anchor="middle">3</text>
<line x1="0.00" y1="119.69" x2="17.60" y2="119.69" stroke="#8c8c8c" stroke-width="0.9"/>
<line x1="0.00" y1="120.59" x2="17.00" y2="120.59" stroke="#e4e4e4" stroke-width="0.8"/>
<text transform="translate(7.90,130.09) scale(0.945,1)" font-size="10.0" fill="#101010" text-anchor="middle">4</text>
<line x1="0.00" y1="132.52" x2="17.60" y2="132.52" stroke="#8c8c8c" stroke-width="0.9"/>
<line x1="0.00" y1="133.42" x2="17.00" y2="133.42" stroke="#e4e4e4" stroke-width="0.8"/>
<text transform="translate(7.90,142.92) scale(0.945,1)" font-size="10.0" fill="#101010" text-anchor="middle">5</text>
<line x1="0.00" y1="145.35" x2="17.60" y2="145.35" stroke="#8c8c8c" stroke-width="0.9"/>
<line x1="0.00" y1="146.25" x2="17.00" y2="146.25" stroke="#e4e4e4" stroke-width="0.8"/>
<text transform="translate(7.90,155.75) scale(0.945,1)" font-size="10.0" fill="#101010" text-anchor="middle">6</text>
<line x1="0.00" y1="158.18" x2="17.60" y2="158.18" stroke="#8c8c8c" stroke-width="0.9"/>
<line x1="0.00" y1="159.08" x2="17.00" y2="159.08" stroke="#e4e4e4" stroke-width="0.8"/>
<text transform="translate(7.90,168.58) scale(0.945,1)" font-size="10.0" fill="#101010" text-anchor="middle">7</text>
<line x1="0.00" y1="171.01" x2="17.60" y2="171.01" stroke="#8c8c8c" stroke-width="0.9"/>
<line x1="0.00" y1="171.91" x2="17.00" y2="171.91" stroke="#e4e4e4" stroke-width="0.8"/>
<text transform="translate(7.90,181.41) scale(0.945,1)" font-size="10.0" fill="#101010" text-anchor="middle">8</text>
<line x1="0.00" y1="183.84" x2="17.60" y2="183.84" stroke="#8c8c8c" stroke-width="0.9"/>
<line x1="0.00" y1="184.74" x2="17.00" y2="184.74" stroke="#e4e4e4" stroke-width="0.8"/>
<text transform="translate(7.90,194.24) scale(0.945,1)" font-size="10.0" fill="#101010" text-anchor="middle">9</text>
<line x1="0.00" y1="196.67" x2="17.60" y2="196.67" stroke="#8c8c8c" stroke-width="0.9"/>
<line x1="0.00" y1="197.57" x2="17.00" y2="197.57" stroke="#e4e4e4" stroke-width="0.8"/>
<text transform="translate(7.90,207.07) scale(0.945,1)" font-size="10.0" fill="#101010" text-anchor="middle">10</text>
<line x1="0.00" y1="209.50" x2="17.60" y2="209.50" stroke="#8c8c8c" stroke-width="0.9"/>
<line x1="0.00" y1="210.40" x2="17.00" y2="210.40" stroke="#e4e4e4" stroke-width="0.8"/>
<text transform="translate(7.90,219.90) scale(0.945,1)" font-size="10.0" fill="#101010" text-anchor="middle">11</text>
<line x1="0.00" y1="222.33" x2="17.60" y2="222.33" stroke="#8c8c8c" stroke-width="0.9"/>
<line x1="0.00" y1="223.23" x2="17.00" y2="223.23" stroke="#e4e4e4" stroke-width="0.8"/>
<text transform="translate(7.90,232.73) scale(0.945,1)" font-size="10.0" fill="#101010" text-anchor="middle">12</text>
<line x1="0.00" y1="235.16" x2="17.60" y2="235.16" stroke="#8c8c8c" stroke-width="0.9"/>
<line x1="0.00" y1="236.06" x2="17.00" y2="236.06" stroke="#e4e4e4" stroke-width="0.8"/>
<text transform="translate(7.90,245.56) scale(0.945,1)" font-size="10.0" fill="#101010" text-anchor="middle">13</text>
<line x1="0.00" y1="247.99" x2="17.60" y2="247.99" stroke="#8c8c8c" stroke-width="0.9"/>
<line x1="0.00" y1="248.89" x2="17.00" y2="248.89" stroke="#e4e4e4" stroke-width="0.8"/>
<text transform="translate(7.90,258.39) scale(0.945,1)" font-size="10.0" fill="#101010" text-anchor="middle">14</text>
<line x1="0.00" y1="260.82" x2="17.60" y2="260.82" stroke="#8c8c8c" stroke-width="0.9"/>
<line x1="0.00" y1="261.72" x2="17.00" y2="261.72" stroke="#e4e4e4" stroke-width="0.8"/>
<text transform="translate(7.90,271.22) scale(0.945,1)" font-size="10.0" fill="#101010" text-anchor="middle">15</text>
<line x1="0.00" y1="273.65" x2="17.60" y2="273.65" stroke="#8c8c8c" stroke-width="0.9"/>
<line x1="0.00" y1="274.55" x2="17.00" y2="274.55" stroke="#e4e4e4" stroke-width="0.8"/>
<text transform="translate(7.90,284.05) scale(0.945,1)" font-size="10.0" fill="#101010" text-anchor="middle">16</text>
<line x1="0.00" y1="286.48" x2="17.60" y2="286.48" stroke="#8c8c8c" stroke-width="0.9"/>
<line x1="0.00" y1="287.38" x2="17.00" y2="287.38" stroke="#e4e4e4" stroke-width="0.8"/>
<text transform="translate(7.90,296.88) scale(0.945,1)" font-size="10.0" fill="#101010" text-anchor="middle">17</text>
<line x1="0.00" y1="299.31" x2="17.60" y2="299.31" stroke="#8c8c8c" stroke-width="0.9"/>
<line x1="0.00" y1="300.21" x2="17.00" y2="300.21" stroke="#e4e4e4" stroke-width="0.8"/>
<text transform="translate(7.90,309.71) scale(0.945,1)" font-size="10.0" fill="#101010" text-anchor="middle">18</text>
<line x1="0.00" y1="312.14" x2="17.60" y2="312.14" stroke="#8c8c8c" stroke-width="0.9"/>
<line x1="0.00" y1="313.04" x2="17.00" y2="313.04" stroke="#e4e4e4" stroke-width="0.8"/>
<text transform="translate(7.90,322.54) scale(0.945,1)" font-size="10.0" fill="#101010" text-anchor="middle">19</text>
<line x1="0.00" y1="324.97" x2="17.60" y2="324.97" stroke="#8c8c8c" stroke-width="0.9"/>
<line x1="0.00" y1="325.87" x2="17.00" y2="325.87" stroke="#e4e4e4" stroke-width="0.8"/>
<text transform="translate(7.90,335.37) scale(0.945,1)" font-size="10.0" fill="#101010" text-anchor="middle">20</text>
<line x1="0.00" y1="337.80" x2="17.60" y2="337.80" stroke="#8c8c8c" stroke-width="0.9"/>
<line x1="0.00" y1="338.70" x2="17.00" y2="338.70" stroke="#e4e4e4" stroke-width="0.8"/>
<text transform="translate(7.90,348.20) scale(0.945,1)" font-size="10.0" fill="#101010" text-anchor="middle">21</text>
<line x1="0.00" y1="350.63" x2="17.60" y2="350.63" stroke="#8c8c8c" stroke-width="0.9"/>
<line x1="0.00" y1="351.53" x2="17.00" y2="351.53" stroke="#e4e4e4" stroke-width="0.8"/>
<text transform="translate(7.90,361.03) scale(0.945,1)" font-size="10.0" fill="#101010" text-anchor="middle">22</text>
<line x1="0.00" y1="363.46" x2="17.60" y2="363.46" stroke="#8c8c8c" stroke-width="0.9"/>
<line x1="0.00" y1="364.36" x2="17.00" y2="364.36" stroke="#e4e4e4" stroke-width="0.8"/>
<text transform="translate(7.90,373.86) scale(0.945,1)" font-size="10.0" fill="#101010" text-anchor="middle">23</text>
<line x1="0.00" y1="376.29" x2="17.60" y2="376.29" stroke="#8c8c8c" stroke-width="0.9"/>
<line x1="0.00" y1="377.19" x2="17.00" y2="377.19" stroke="#e4e4e4" stroke-width="0.8"/>
<text transform="translate(7.90,386.69) scale(0.945,1)" font-size="10.0" fill="#101010" text-anchor="middle">24</text>
<line x1="0.00" y1="389.12" x2="17.60" y2="389.12" stroke="#8c8c8c" stroke-width="0.9"/>
<line x1="0.00" y1="390.02" x2="17.00" y2="390.02" stroke="#e4e4e4" stroke-width="0.8"/>
<text transform="translate(7.90,399.52) scale(0.945,1)" font-size="10.0" fill="#101010" text-anchor="middle">25</text>
<line x1="0.00" y1="401.95" x2="17.60" y2="401.95" stroke="#8c8c8c" stroke-width="0.9"/>
<line x1="0.00" y1="402.85" x2="17.00" y2="402.85" stroke="#e4e4e4" stroke-width="0.8"/>
<text transform="translate(7.90,412.35) scale(0.945,1)" font-size="10.0" fill="#101010" text-anchor="middle">26</text>
<line x1="0.00" y1="414.78" x2="17.60" y2="414.78" stroke="#8c8c8c" stroke-width="0.9"/>
<line x1="0.00" y1="415.68" x2="17.00" y2="415.68" stroke="#e4e4e4" stroke-width="0.8"/>
<text transform="translate(7.90,425.18) scale(0.945,1)" font-size="10.0" fill="#101010" text-anchor="middle">27</text>
<line x1="0.00" y1="427.61" x2="17.60" y2="427.61" stroke="#8c8c8c" stroke-width="0.9"/>
<line x1="0.00" y1="428.51" x2="17.00" y2="428.51" stroke="#e4e4e4" stroke-width="0.8"/>
<text transform="translate(7.90,438.01) scale(0.945,1)" font-size="10.0" fill="#101010" text-anchor="middle">28</text>
<line x1="0.00" y1="440.44" x2="17.60" y2="440.44" stroke="#8c8c8c" stroke-width="0.9"/>
<line x1="0.00" y1="441.34" x2="17.00" y2="441.34" stroke="#e4e4e4" stroke-width="0.8"/>
<text transform="translate(7.90,450.84) scale(0.945,1)" font-size="10.0" fill="#101010" text-anchor="middle">29</text>
<line x1="0.00" y1="453.27" x2="17.60" y2="453.27" stroke="#8c8c8c" stroke-width="0.9"/>
<line x1="0.00" y1="454.17" x2="17.00" y2="454.17" stroke="#e4e4e4" stroke-width="0.8"/>
<text transform="translate(7.90,463.67) scale(0.945,1)" font-size="10.0" fill="#101010" text-anchor="middle">30</text>
<line x1="0.00" y1="466.10" x2="17.60" y2="466.10" stroke="#8c8c8c" stroke-width="0.9"/>
<line x1="0.00" y1="467.00" x2="17.00" y2="467.00" stroke="#e4e4e4" stroke-width="0.8"/>
<text transform="translate(7.90,476.50) scale(0.945,1)" font-size="10.0" fill="#101010" text-anchor="middle">31</text>
<line x1="0.00" y1="478.93" x2="17.60" y2="478.93" stroke="#8c8c8c" stroke-width="0.9"/>
<line x1="0.00" y1="479.83" x2="17.00" y2="479.83" stroke="#e4e4e4" stroke-width="0.8"/>
<text transform="translate(7.90,489.33) scale(0.945,1)" font-size="10.0" fill="#101010" text-anchor="middle">32</text>
<line x1="17.30" y1="81.00" x2="17.30" y2="491.50" stroke="#707070" stroke-width="1"/>
<line x1="17.20" y1="94.03" x2="17.20" y2="106.86" stroke="#202020" stroke-width="1.5"/>
<line x1="0.00" y1="106.56" x2="17.60" y2="106.56" stroke="#404040" stroke-width="1.0"/>
<line x1="0.00" y1="491.40" x2="17.60" y2="491.40" stroke="#707070" stroke-width="1"/>
<rect x="0.00" y="68.60" width="757.30" height="12.60" fill="#c0c0c0"/>
<line x1="0.00" y1="68.70" x2="757.30" y2="68.70" stroke="#404040" stroke-width="1.2"/>
<line x1="0.00" y1="81.00" x2="757.30" y2="81.00" stroke="#707070" stroke-width="1"/>
<line x1="17.60" y1="69.50" x2="17.60" y2="81.00" stroke="#8c8c8c" stroke-width="0.9"/>
<line x1="18.50" y1="69.80" x2="18.50" y2="80.50" stroke="#e4e4e4" stroke-width="0.8"/>
<text transform="translate(41.76,78.90) scale(0.945,1)" font-size="10.0" fill="#101010" text-anchor="middle">AL</text>
<line x1="65.92" y1="69.50" x2="65.92" y2="81.00" stroke="#8c8c8c" stroke-width="0.9"/>
<line x1="66.82" y1="69.80" x2="66.82" y2="80.50" stroke="#e4e4e4" stroke-width="0.8"/>
<text transform="translate(90.08,78.90) scale(0.945,1)" font-size="10.0" fill="#101010" text-anchor="middle">AM</text>
<line x1="114.24" y1="69.50" x2="114.24" y2="81.00" stroke="#8c8c8c" stroke-width="0.9"/>
<line x1="115.14" y1="69.80" x2="115.14" y2="80.50" stroke="#e4e4e4" stroke-width="0.8"/>
<text transform="translate(138.40,78.90) scale(0.945,1)" font-size="10.0" fill="#101010" text-anchor="middle">AN</text>
<line x1="162.56" y1="69.50" x2="162.56" y2="81.00" stroke="#8c8c8c" stroke-width="0.9"/>
<line x1="163.46" y1="69.80" x2="163.46" y2="80.50" stroke="#e4e4e4" stroke-width="0.8"/>
<text transform="translate(186.72,78.90) scale(0.945,1)" font-size="10.0" fill="#101010" text-anchor="middle">AO</text>
<line x1="210.88" y1="69.50" x2="210.88" y2="81.00" stroke="#8c8c8c" stroke-width="0.9"/>
<line x1="211.78" y1="69.80" x2="211.78" y2="80.50" stroke="#e4e4e4" stroke-width="0.8"/>
<text transform="translate(235.04,78.90) scale(0.945,1)" font-size="10.0" fill="#101010" text-anchor="middle">AP</text>
<line x1="259.20" y1="69.50" x2="259.20" y2="81.00" stroke="#8c8c8c" stroke-width="0.9"/>
<line x1="260.10" y1="69.80" x2="260.10" y2="80.50" stroke="#e4e4e4" stroke-width="0.8"/>
<text transform="translate(283.36,78.90) scale(0.945,1)" font-size="10.0" fill="#101010" text-anchor="middle">AQ</text>
<line x1="307.52" y1="69.50" x2="307.52" y2="81.00" stroke="#8c8c8c" stroke-width="0.9"/>
<line x1="308.42" y1="69.80" x2="308.42" y2="80.50" stroke="#e4e4e4" stroke-width="0.8"/>
<text transform="translate(331.68,78.90) scale(0.945,1)" font-size="10.0" fill="#101010" text-anchor="middle">AR</text>
<line x1="355.84" y1="69.50" x2="355.84" y2="81.00" stroke="#8c8c8c" stroke-width="0.9"/>
<line x1="356.74" y1="69.80" x2="356.74" y2="80.50" stroke="#e4e4e4" stroke-width="0.8"/>
<text transform="translate(380.00,78.90) scale(0.945,1)" font-size="10.0" fill="#101010" text-anchor="middle">AS</text>
<line x1="404.16" y1="69.50" x2="404.16" y2="81.00" stroke="#8c8c8c" stroke-width="0.9"/>
<line x1="405.06" y1="69.80" x2="405.06" y2="80.50" stroke="#e4e4e4" stroke-width="0.8"/>
<rect x="404.46" y="69.40" width="47.72" height="11.40" fill="#c8c8c8" stroke="#303030" stroke-width="1.0"/>
<text transform="translate(428.32,78.90) scale(0.945,1)" font-size="10.0" fill="#000" text-anchor="middle" font-weight="bold">AT</text>
<line x1="452.48" y1="69.50" x2="452.48" y2="81.00" stroke="#8c8c8c" stroke-width="0.9"/>
<line x1="453.38" y1="69.80" x2="453.38" y2="80.50" stroke="#e4e4e4" stroke-width="0.8"/>
<text transform="translate(476.64,78.90) scale(0.945,1)" font-size="10.0" fill="#101010" text-anchor="middle">AU</text>
<line x1="500.80" y1="69.50" x2="500.80" y2="81.00" stroke="#8c8c8c" stroke-width="0.9"/>
<line x1="501.70" y1="69.80" x2="501.70" y2="80.50" stroke="#e4e4e4" stroke-width="0.8"/>
<text transform="translate(524.96,78.90) scale(0.945,1)" font-size="10.0" fill="#101010" text-anchor="middle">AV</text>
<line x1="549.12" y1="69.50" x2="549.12" y2="81.00" stroke="#8c8c8c" stroke-width="0.9"/>
<line x1="550.02" y1="69.80" x2="550.02" y2="80.50" stroke="#e4e4e4" stroke-width="0.8"/>
<text transform="translate(573.28,78.90) scale(0.945,1)" font-size="10.0" fill="#101010" text-anchor="middle">AW</text>
<line x1="597.44" y1="69.50" x2="597.44" y2="81.00" stroke="#8c8c8c" stroke-width="0.9"/>
<line x1="598.34" y1="69.80" x2="598.34" y2="80.50" stroke="#e4e4e4" stroke-width="0.8"/>
<text transform="translate(621.60,78.90) scale(0.945,1)" font-size="10.0" fill="#101010" text-anchor="middle">AX</text>
<line x1="645.76" y1="69.50" x2="645.76" y2="81.00" stroke="#8c8c8c" stroke-width="0.9"/>
<line x1="646.66" y1="69.80" x2="646.66" y2="80.50" stroke="#e4e4e4" stroke-width="0.8"/>
<text transform="translate(669.92,78.90) scale(0.945,1)" font-size="10.0" fill="#101010" text-anchor="middle">AY</text>
<line x1="694.08" y1="69.50" x2="694.08" y2="81.00" stroke="#8c8c8c" stroke-width="0.9"/>
<line x1="694.98" y1="69.80" x2="694.98" y2="80.50" stroke="#e4e4e4" stroke-width="0.8"/>
<text transform="translate(718.24,78.90) scale(0.945,1)" font-size="10.0" fill="#101010" text-anchor="middle">AZ</text>
<line x1="742.40" y1="69.50" x2="742.40" y2="81.00" stroke="#8c8c8c" stroke-width="0.9"/>
<line x1="743.30" y1="69.80" x2="743.30" y2="80.50" stroke="#e4e4e4" stroke-width="0.8"/>
<line x1="17.30" y1="69.50" x2="17.30" y2="81.00" stroke="#8c8c8c" stroke-width="0.9"/>
<pattern id="dp1" width="2" height="2" patternUnits="userSpaceOnUse"><rect width="2" height="2" fill="#d6d6d6"/><rect width="1" height="1" fill="#ececec"/><rect x="1" y="1" width="1" height="1" fill="#ececec"/></pattern>
<rect x="757.30" y="68.60" width="12.70" height="423.00" fill="url(#dp1)"/>
<rect x="757.60" y="68.80" width="10.90" height="4.00" fill="#c0c0c0"/>
<line x1="757.60" y1="69.20" x2="768.50" y2="69.20" stroke="#f4f4f4" stroke-width="0.8"/>
<line x1="758.00" y1="68.80" x2="758.00" y2="72.80" stroke="#f4f4f4" stroke-width="0.8"/>
<line x1="757.60" y1="72.40" x2="768.50" y2="72.40" stroke="#505050" stroke-width="0.9"/>
<line x1="768.10" y1="68.80" x2="768.10" y2="72.80" stroke="#505050" stroke-width="0.9"/>
<rect x="757.60" y="73.00" width="10.90" height="11.80" fill="#c0c0c0"/>
<line x1="757.60" y1="73.40" x2="768.50" y2="73.40" stroke="#f4f4f4" stroke-width="0.8"/>
<line x1="758.00" y1="73.00" x2="758.00" y2="84.80" stroke="#f4f4f4" stroke-width="0.8"/>
<line x1="757.60" y1="84.40" x2="768.50" y2="84.40" stroke="#505050" stroke-width="0.9"/>
<line x1="768.10" y1="73.00" x2="768.10" y2="84.80" stroke="#505050" stroke-width="0.9"/>
<path d="M760.3,80.6 L765.9,80.6 L763.0999999999999,77.4 Z" stroke="none" fill="#000" stroke-width="1"/>
<rect x="757.60" y="85.00" width="10.90" height="29.90" fill="#c0c0c0"/>
<line x1="757.60" y1="85.40" x2="768.50" y2="85.40" stroke="#f4f4f4" stroke-width="0.8"/>
<line x1="758.00" y1="85.00" x2="758.00" y2="114.90" stroke="#f4f4f4" stroke-width="0.8"/>
<line x1="757.60" y1="114.50" x2="768.50" y2="114.50" stroke="#505050" stroke-width="0.9"/>
<line x1="768.10" y1="85.00" x2="768.10" y2="114.90" stroke="#505050" stroke-width="0.9"/>
<rect x="757.80" y="480.60" width="10.90" height="11.00" fill="#c0c0c0"/>
<line x1="757.80" y1="481.00" x2="768.70" y2="481.00" stroke="#f4f4f4" stroke-width="0.8"/>
<line x1="758.20" y1="480.60" x2="758.20" y2="491.60" stroke="#f4f4f4" stroke-width="0.8"/>
<line x1="757.80" y1="491.20" x2="768.70" y2="491.20" stroke="#505050" stroke-width="0.9"/>
<line x1="768.30" y1="480.60" x2="768.30" y2="491.60" stroke="#505050" stroke-width="0.9"/>
<path d="M760.5,484.6 L766.0999999999999,484.6 L763.3,487.8 Z" stroke="none" fill="#000" stroke-width="1"/>
<rect x="0.00" y="491.60" width="770.00" height="12.40" fill="#c0c0c0"/>
<line x1="0.00" y1="491.70" x2="757.30" y2="491.70" stroke="#404040" stroke-width="1.1"/>
<rect x="-1.40" y="492.40" width="11.10" height="12.60" fill="#c0c0c0"/>
<line x1="-1.40" y1="492.80" x2="9.70" y2="492.80" stroke="#f4f4f4" stroke-width="0.8"/>
<line x1="-1.00" y1="492.40" x2="-1.00" y2="505.00" stroke="#f4f4f4" stroke-width="0.8"/>
<line x1="-1.40" y1="504.60" x2="9.70" y2="504.60" stroke="#505050" stroke-width="0.9"/>
<line x1="9.30" y1="492.40" x2="9.30" y2="505.00" stroke="#505050" stroke-width="0.9"/>
<rect x="9.70" y="492.40" width="11.10" height="12.60" fill="#c0c0c0"/>
<line x1="9.70" y1="492.80" x2="20.80" y2="492.80" stroke="#f4f4f4" stroke-width="0.8"/>
<line x1="10.10" y1="492.40" x2="10.10" y2="505.00" stroke="#f4f4f4" stroke-width="0.8"/>
<line x1="9.70" y1="504.60" x2="20.80" y2="504.60" stroke="#505050" stroke-width="0.9"/>
<line x1="20.40" y1="492.40" x2="20.40" y2="505.00" stroke="#505050" stroke-width="0.9"/>
<rect x="20.80" y="492.40" width="11.10" height="12.60" fill="#c0c0c0"/>
<line x1="20.80" y1="492.80" x2="31.90" y2="492.80" stroke="#f4f4f4" stroke-width="0.8"/>
<line x1="21.20" y1="492.40" x2="21.20" y2="505.00" stroke="#f4f4f4" stroke-width="0.8"/>
<line x1="20.80" y1="504.60" x2="31.90" y2="504.60" stroke="#505050" stroke-width="0.9"/>
<line x1="31.50" y1="492.40" x2="31.50" y2="505.00" stroke="#505050" stroke-width="0.9"/>
<rect x="31.80" y="492.40" width="11.10" height="12.60" fill="#c0c0c0"/>
<line x1="31.80" y1="492.80" x2="42.90" y2="492.80" stroke="#f4f4f4" stroke-width="0.8"/>
<line x1="32.20" y1="492.40" x2="32.20" y2="505.00" stroke="#f4f4f4" stroke-width="0.8"/>
<line x1="31.80" y1="504.60" x2="42.90" y2="504.60" stroke="#505050" stroke-width="0.9"/>
<line x1="42.50" y1="492.40" x2="42.50" y2="505.00" stroke="#505050" stroke-width="0.9"/>
<path d="M5.8,494.9 L1.4,498.4 L5.8,501.9 Z" stroke="none" fill="#000" stroke-width="1"/>
<line x1="0.70" y1="494.90" x2="0.70" y2="501.90" stroke="#000" stroke-width="1.0"/>
<path d="M17.1,494.9 L12.7,498.4 L17.1,501.9 Z" stroke="none" fill="#000" stroke-width="1"/>
<path d="M23.8,494.9 L28.2,498.4 L23.8,501.9 Z" stroke="none" fill="#000" stroke-width="1"/>
<path d="M34.8,494.9 L39.2,498.4 L34.8,501.9 Z" stroke="none" fill="#000" stroke-width="1"/>
<line x1="40.40" y1="494.90" x2="40.40" y2="501.90" stroke="#000" stroke-width="1.0"/>
<path d="M127.6,492.2 L132.6,505 L180.6,505 L186.4,492.2 Z" stroke="#202020" fill="#f0f0f0" stroke-width="0.9"/>
<line x1="128.40" y1="492.00" x2="185.60" y2="492.00" stroke="#f0f0f0" stroke-width="1.6"/>
<path d="M43.5,492.2 L49.5,505 L87.5,505 L93.2,492.2" stroke="#202020" fill="none" stroke-width="0.9"/>
<path d="M93.2,492.2 L87.5,505 L122.6,505 L127.6,492.2" stroke="#202020" fill="none" stroke-width="0.9"/>
<text x="53.20" y="501.20" font-size="8.6" fill="#101010" textLength="29.90" lengthAdjust="spacingAndGlyphs">Headers</text>
<text x="96.10" y="501.20" font-size="8.6" fill="#101010" textLength="24.70" lengthAdjust="spacingAndGlyphs">Sheet1</text>
<text x="132.50" y="501.20" font-size="8.6" fill="#000" font-weight="bold" textLength="45.50" lengthAdjust="spacingAndGlyphs">lwrmorrow</text>
<rect x="456.20" y="492.40" width="2.20" height="11.60" fill="#c0c0c0"/>
<line x1="456.20" y1="492.80" x2="458.40" y2="492.80" stroke="#f4f4f4" stroke-width="0.8"/>
<line x1="456.60" y1="492.40" x2="456.60" y2="504.00" stroke="#f4f4f4" stroke-width="0.8"/>
<line x1="456.20" y1="503.60" x2="458.40" y2="503.60" stroke="#505050" stroke-width="0.9"/>
<line x1="458.00" y1="492.40" x2="458.00" y2="504.00" stroke="#505050" stroke-width="0.9"/>
<pattern id="dp2" width="2" height="2" patternUnits="userSpaceOnUse"><rect width="2" height="2" fill="#d6d6d6"/><rect width="1" height="1" fill="#ececec"/><rect x="1" y="1" width="1" height="1" fill="#ececec"/></pattern>
<rect x="458.40" y="492.40" width="298.90" height="11.60" fill="url(#dp2)"/>
<rect x="458.40" y="492.40" width="11.30" height="11.60" fill="#c0c0c0"/>
<line x1="458.40" y1="492.80" x2="469.70" y2="492.80" stroke="#f4f4f4" stroke-width="0.8"/>
<line x1="458.80" y1="492.40" x2="458.80" y2="504.00" stroke="#f4f4f4" stroke-width="0.8"/>
<line x1="458.40" y1="503.60" x2="469.70" y2="503.60" stroke="#505050" stroke-width="0.9"/>
<line x1="469.30" y1="492.40" x2="469.30" y2="504.00" stroke="#505050" stroke-width="0.9"/>
<path d="M465.8,494.7 L461.4,498.2 L465.8,501.7 Z" stroke="none" fill="#000" stroke-width="1"/>
<rect x="741.80" y="492.40" width="10.90" height="11.60" fill="#c0c0c0"/>
<line x1="741.80" y1="492.80" x2="752.70" y2="492.80" stroke="#f4f4f4" stroke-width="0.8"/>
<line x1="742.20" y1="492.40" x2="742.20" y2="504.00" stroke="#f4f4f4" stroke-width="0.8"/>
<line x1="741.80" y1="503.60" x2="752.70" y2="503.60" stroke="#505050" stroke-width="0.9"/>
<line x1="752.30" y1="492.40" x2="752.30" y2="504.00" stroke="#505050" stroke-width="0.9"/>
<path d="M745.4,494.7 L749.8,498.2 L745.4,501.7 Z" stroke="none" fill="#000" stroke-width="1"/>
<rect x="626.00" y="492.40" width="61.00" height="11.60" fill="#c0c0c0"/>
<line x1="626.00" y1="492.80" x2="687.00" y2="492.80" stroke="#f4f4f4" stroke-width="0.8"/>
<line x1="626.40" y1="492.40" x2="626.40" y2="504.00" stroke="#f4f4f4" stroke-width="0.8"/>
<line x1="626.00" y1="503.60" x2="687.00" y2="503.60" stroke="#505050" stroke-width="0.9"/>
<line x1="686.60" y1="492.40" x2="686.60" y2="504.00" stroke="#505050" stroke-width="0.9"/>
<rect x="752.70" y="492.20" width="17.30" height="11.80" fill="#c0c0c0"/>
<line x1="753.70" y1="492.40" x2="753.70" y2="504.00" stroke="#303030" stroke-width="1.1"/>
<line x1="755.20" y1="492.40" x2="755.20" y2="504.00" stroke="#f0f0f0" stroke-width="0.9"/>
<line x1="757.90" y1="492.40" x2="757.90" y2="504.00" stroke="#404040" stroke-width="1.1"/>
<line x1="757.40" y1="492.60" x2="770.00" y2="492.60" stroke="#505050" stroke-width="1.0"/>
<rect x="0.00" y="0.00" width="770.00" height="14.00" fill="#c0c0c0"/>
<text x="21.60" y="9.80" font-size="8.5" fill="#000" textLength="11.40" lengthAdjust="spacingAndGlyphs" stroke="#000" stroke-width="0.18">File</text>
<line x1="21.60" y1="11.20" x2="24.59" y2="11.20" stroke="#101010" stroke-width="0.8"/>
<text x="41.50" y="9.80" font-size="8.5" fill="#000" textLength="12.00" lengthAdjust="spacingAndGlyphs" stroke="#000" stroke-width="0.18">Edit</text>
<line x1="41.50" y1="11.20" x2="44.65" y2="11.20" stroke="#101010" stroke-width="0.8"/>
<text x="62.60" y="9.80" font-size="8.5" fill="#000" textLength="16.40" lengthAdjust="spacingAndGlyphs" stroke="#000" stroke-width="0.18">View</text>
<line x1="62.60" y1="11.20" x2="66.91" y2="11.20" stroke="#101010" stroke-width="0.8"/>
<text x="86.50" y="9.80" font-size="8.5" fill="#000" textLength="21.50" lengthAdjust="spacingAndGlyphs" stroke="#000" stroke-width="0.18">Insert</text>
<line x1="86.50" y1="11.20" x2="90.26" y2="11.20" stroke="#101010" stroke-width="0.8"/>
<text x="116.00" y="9.80" font-size="8.5" fill="#000" textLength="25.00" lengthAdjust="spacingAndGlyphs" stroke="#000" stroke-width="0.18">Format</text>
<line x1="120.17" y1="11.20" x2="124.54" y2="11.20" stroke="#101010" stroke-width="0.8"/>
<text x="149.60" y="9.80" font-size="8.5" fill="#000" textLength="17.40" lengthAdjust="spacingAndGlyphs" stroke="#000" stroke-width="0.18">Tools</text>
<line x1="149.60" y1="11.20" x2="153.25" y2="11.20" stroke="#101010" stroke-width="0.8"/>
<text x="176.00" y="9.80" font-size="8.5" fill="#000" textLength="17.00" lengthAdjust="spacingAndGlyphs" stroke="#000" stroke-width="0.18">Data</text>
<line x1="176.00" y1="11.20" x2="180.46" y2="11.20" stroke="#101010" stroke-width="0.8"/>
<text x="200.40" y="9.80" font-size="8.5" fill="#000" textLength="39.50" lengthAdjust="spacingAndGlyphs" stroke="#000" stroke-width="0.18">Accounting</text>
<line x1="200.40" y1="11.20" x2="204.55" y2="11.20" stroke="#101010" stroke-width="0.8"/>
<text x="247.70" y="9.80" font-size="8.5" fill="#000" textLength="28.80" lengthAdjust="spacingAndGlyphs" stroke="#000" stroke-width="0.18">Window</text>
<line x1="247.70" y1="11.20" x2="252.74" y2="11.20" stroke="#101010" stroke-width="0.8"/>
<text x="284.00" y="9.80" font-size="8.5" fill="#000" textLength="15.60" lengthAdjust="spacingAndGlyphs" stroke="#000" stroke-width="0.18">Help</text>
<line x1="284.00" y1="11.20" x2="288.10" y2="11.20" stroke="#101010" stroke-width="0.8"/>
<line x1="3.00" y1="0.00" x2="3.00" y2="13.40" stroke="#606060" stroke-width="0.9"/>
<rect x="0.00" y="0.00" width="2.40" height="13.60" fill="#d4d4d4"/>
<path d="M8,1.3 H14.6 L17,3.6 V11.9 H8 Z" stroke="#404040" fill="#f4f4f4" stroke-width="0.9"/>
<line x1="9.60" y1="7.20" x2="15.40" y2="7.20" stroke="#b0b0b0" stroke-width="0.6"/>
<line x1="9.60" y1="9.20" x2="15.40" y2="9.20" stroke="#b0b0b0" stroke-width="0.6"/>
<text x="5.60" y="7.00" font-size="6.4" fill="#18a0b8" font-weight="bold" textLength="5.80" lengthAdjust="spacingAndGlyphs">X</text>
<text x="5.20" y="6.60" font-size="6.4" fill="#101018" font-weight="bold" textLength="5.80" lengthAdjust="spacingAndGlyphs">X</text>
<rect x="731.00" y="1.30" width="11.20" height="9.80" fill="#c0c0c0"/>
<line x1="731.00" y1="1.70" x2="742.20" y2="1.70" stroke="#f4f4f4" stroke-width="0.8"/>
<line x1="731.40" y1="1.30" x2="731.40" y2="11.10" stroke="#f4f4f4" stroke-width="0.8"/>
<line x1="731.00" y1="10.70" x2="742.20" y2="10.70" stroke="#505050" stroke-width="0.9"/>
<line x1="741.80" y1="1.30" x2="741.80" y2="11.10" stroke="#505050" stroke-width="0.9"/>
<rect x="742.80" y="1.30" width="11.60" height="9.80" fill="#c0c0c0"/>
<line x1="742.80" y1="1.70" x2="754.40" y2="1.70" stroke="#f4f4f4" stroke-width="0.8"/>
<line x1="743.20" y1="1.30" x2="743.20" y2="11.10" stroke="#f4f4f4" stroke-width="0.8"/>
<line x1="742.80" y1="10.70" x2="754.40" y2="10.70" stroke="#505050" stroke-width="0.9"/>
<line x1="754.00" y1="1.30" x2="754.00" y2="11.10" stroke="#505050" stroke-width="0.9"/>
<rect x="756.60" y="1.30" width="12.20" height="9.80" fill="#c0c0c0"/>
<line x1="756.60" y1="1.70" x2="768.80" y2="1.70" stroke="#f4f4f4" stroke-width="0.8"/>
<line x1="757.00" y1="1.30" x2="757.00" y2="11.10" stroke="#f4f4f4" stroke-width="0.8"/>
<line x1="756.60" y1="10.70" x2="768.80" y2="10.70" stroke="#505050" stroke-width="0.9"/>
<line x1="768.40" y1="1.30" x2="768.40" y2="11.10" stroke="#505050" stroke-width="0.9"/>
<line x1="733.50" y1="8.60" x2="738.40" y2="8.60" stroke="#000" stroke-width="1.5"/>
<rect x="746.80" y="3.40" width="5.00" height="3.80" fill="none" stroke="#000" stroke-width="0.9"/>
<rect x="745.20" y="5.40" width="5.00" height="3.80" fill="#c0c0c0" stroke="#000" stroke-width="0.9"/>
<path d="M759.6,3.4 L765.8,9 M765.8,3.4 L759.6,9" stroke="#000" fill="none" stroke-width="1.3"/>
<line x1="0.00" y1="14.20" x2="770.00" y2="14.20" stroke="#a8a8a8" stroke-width="0.7"/>
<rect x="0.00" y="14.60" width="480.40" height="20.40" fill="#c0c0c0"/>
<line x1="0.00" y1="15.00" x2="480.40" y2="15.00" stroke="#dcdcdc" stroke-width="0.8"/>
<line x1="0.40" y1="14.60" x2="0.40" y2="35.00" stroke="#dcdcdc" stroke-width="0.8"/>
<line x1="0.00" y1="34.60" x2="480.40" y2="34.60" stroke="#a0a0a0" stroke-width="0.8"/>
<line x1="480.00" y1="14.60" x2="480.00" y2="35.00" stroke="#a0a0a0" stroke-width="0.8"/>
<rect x="482.20" y="14.60" width="53.80" height="20.40" fill="#c0c0c0"/>
<line x1="482.20" y1="15.00" x2="536.00" y2="15.00" stroke="#dcdcdc" stroke-width="0.8"/>
<line x1="482.60" y1="14.60" x2="482.60" y2="35.00" stroke="#dcdcdc" stroke-width="0.8"/>
<line x1="482.20" y1="34.60" x2="536.00" y2="34.60" stroke="#a0a0a0" stroke-width="0.8"/>
<line x1="535.60" y1="14.60" x2="535.60" y2="35.00" stroke="#a0a0a0" stroke-width="0.8"/>
<rect x="538.00" y="14.60" width="101.60" height="20.40" fill="#c0c0c0"/>
<line x1="538.00" y1="15.00" x2="639.60" y2="15.00" stroke="#dcdcdc" stroke-width="0.8"/>
<line x1="538.40" y1="14.60" x2="538.40" y2="35.00" stroke="#dcdcdc" stroke-width="0.8"/>
<line x1="538.00" y1="34.60" x2="639.60" y2="34.60" stroke="#a0a0a0" stroke-width="0.8"/>
<line x1="639.20" y1="14.60" x2="639.20" y2="35.00" stroke="#a0a0a0" stroke-width="0.8"/>
<rect x="0.00" y="35.40" width="493.20" height="18.80" fill="#c0c0c0"/>
<line x1="0.00" y1="35.80" x2="493.20" y2="35.80" stroke="#dcdcdc" stroke-width="0.8"/>
<line x1="0.40" y1="35.40" x2="0.40" y2="54.20" stroke="#dcdcdc" stroke-width="0.8"/>
<line x1="0.00" y1="53.80" x2="493.20" y2="53.80" stroke="#a0a0a0" stroke-width="0.8"/>
<line x1="492.80" y1="35.40" x2="492.80" y2="54.20" stroke="#a0a0a0" stroke-width="0.8"/>
<rect x="494.80" y="35.40" width="58.80" height="18.80" fill="#c0c0c0"/>
<line x1="494.80" y1="35.80" x2="553.60" y2="35.80" stroke="#dcdcdc" stroke-width="0.8"/>
<line x1="495.20" y1="35.40" x2="495.20" y2="54.20" stroke="#dcdcdc" stroke-width="0.8"/>
<line x1="494.80" y1="53.80" x2="553.60" y2="53.80" stroke="#a0a0a0" stroke-width="0.8"/>
<line x1="553.20" y1="35.40" x2="553.20" y2="54.20" stroke="#a0a0a0" stroke-width="0.8"/>
<rect x="555.20" y="35.40" width="70.80" height="18.80" fill="#c0c0c0"/>
<line x1="555.20" y1="35.80" x2="626.00" y2="35.80" stroke="#dcdcdc" stroke-width="0.8"/>
<line x1="555.60" y1="35.40" x2="555.60" y2="54.20" stroke="#dcdcdc" stroke-width="0.8"/>
<line x1="555.20" y1="53.80" x2="626.00" y2="53.80" stroke="#a0a0a0" stroke-width="0.8"/>
<line x1="625.60" y1="35.40" x2="625.60" y2="54.20" stroke="#a0a0a0" stroke-width="0.8"/>
<line x1="1.60" y1="17.10" x2="1.60" y2="32.50" stroke="#f0f0f0" stroke-width="0.9"/>
<line x1="2.50" y1="17.10" x2="2.50" y2="32.50" stroke="#8a8a8a" stroke-width="0.8"/>
<line x1="3.80" y1="17.10" x2="3.80" y2="32.50" stroke="#f0f0f0" stroke-width="0.9"/>
<line x1="4.70" y1="17.10" x2="4.70" y2="32.50" stroke="#8a8a8a" stroke-width="0.8"/>
<line x1="1.60" y1="37.90" x2="1.60" y2="51.70" stroke="#f0f0f0" stroke-width="0.9"/>
<line x1="2.50" y1="37.90" x2="2.50" y2="51.70" stroke="#8a8a8a" stroke-width="0.8"/>
<line x1="3.80" y1="37.90" x2="3.80" y2="51.70" stroke="#f0f0f0" stroke-width="0.9"/>
<line x1="4.70" y1="37.90" x2="4.70" y2="51.70" stroke="#8a8a8a" stroke-width="0.8"/>
<line x1="484.40" y1="17.10" x2="484.40" y2="32.50" stroke="#f0f0f0" stroke-width="0.9"/>
<line x1="485.30" y1="17.10" x2="485.30" y2="32.50" stroke="#8a8a8a" stroke-width="0.8"/>
<line x1="486.60" y1="17.10" x2="486.60" y2="32.50" stroke="#f0f0f0" stroke-width="0.9"/>
<line x1="487.50" y1="17.10" x2="487.50" y2="32.50" stroke="#8a8a8a" stroke-width="0.8"/>
<line x1="540.40" y1="17.10" x2="540.40" y2="32.50" stroke="#f0f0f0" stroke-width="0.9"/>
<line x1="541.30" y1="17.10" x2="541.30" y2="32.50" stroke="#8a8a8a" stroke-width="0.8"/>
<line x1="542.60" y1="17.10" x2="542.60" y2="32.50" stroke="#f0f0f0" stroke-width="0.9"/>
<line x1="543.50" y1="17.10" x2="543.50" y2="32.50" stroke="#8a8a8a" stroke-width="0.8"/>
<line x1="496.60" y1="37.90" x2="496.60" y2="51.70" stroke="#f0f0f0" stroke-width="0.9"/>
<line x1="497.50" y1="37.90" x2="497.50" y2="51.70" stroke="#8a8a8a" stroke-width="0.8"/>
<line x1="498.80" y1="37.90" x2="498.80" y2="51.70" stroke="#f0f0f0" stroke-width="0.9"/>
<line x1="499.70" y1="37.90" x2="499.70" y2="51.70" stroke="#8a8a8a" stroke-width="0.8"/>
<line x1="557.00" y1="37.90" x2="557.00" y2="51.70" stroke="#f0f0f0" stroke-width="0.9"/>
<line x1="557.90" y1="37.90" x2="557.90" y2="51.70" stroke="#8a8a8a" stroke-width="0.8"/>
<line x1="559.20" y1="37.90" x2="559.20" y2="51.70" stroke="#f0f0f0" stroke-width="0.9"/>
<line x1="560.10" y1="37.90" x2="560.10" y2="51.70" stroke="#8a8a8a" stroke-width="0.8"/>
<text x="493.00" y="28.00" font-size="8.5" fill="#000" textLength="30.60" lengthAdjust="spacingAndGlyphs">XSection</text>
<path d="M527.5,24.6 L531.7,24.6 L529.6,26.8 Z" stroke="none" fill="#101010" stroke-width="1"/>
<text x="547.00" y="28.00" font-size="8.5" fill="#000" textLength="12.00" lengthAdjust="spacingAndGlyphs" stroke="#000" stroke-width="0.12">SW</text>
<text x="565.00" y="28.00" font-size="8.5" fill="#000" textLength="14.90" lengthAdjust="spacingAndGlyphs" stroke="#000" stroke-width="0.12">BVW</text>
<text x="586.40" y="28.00" font-size="8.5" fill="#000" textLength="4.00" lengthAdjust="spacingAndGlyphs" stroke="#000" stroke-width="0.12">K</text>
<text x="596.00" y="28.00" font-size="8.5" fill="#000" textLength="19.50" lengthAdjust="spacingAndGlyphs" stroke="#000" stroke-width="0.12">CAPS</text>
<text x="621.20" y="28.00" font-size="8.5" fill="#000" textLength="13.80" lengthAdjust="spacingAndGlyphs" stroke="#000" stroke-width="0.12">ATT</text>
<text x="30.60" y="48.00" font-size="8.5" fill="#000" textLength="33.00" lengthAdjust="spacingAndGlyphs" stroke="#000" stroke-width="0.12">OpenLAS</text>
<path d="M66.7,44.4 L70.9,44.4 L68.8,46.6 Z" stroke="none" fill="#101010" stroke-width="1"/>
<text x="133.00" y="48.00" font-size="8.5" fill="#000" textLength="21.50" lengthAdjust="spacingAndGlyphs" stroke="#000" stroke-width="0.12">Depth</text>
<text x="160.50" y="48.00" font-size="8.5" fill="#000" textLength="9.50" lengthAdjust="spacingAndGlyphs" stroke="#000" stroke-width="0.12">RT</text>
<text x="176.60" y="48.00" font-size="8.5" fill="#000" textLength="10.90" lengthAdjust="spacingAndGlyphs" stroke="#000" stroke-width="0.12">Vsh</text>
<text x="194.00" y="48.00" font-size="8.5" fill="#000" textLength="9.50" lengthAdjust="spacingAndGlyphs" stroke="#000" stroke-width="0.12">Phi</text>
<text x="215.00" y="48.00" font-size="8.5" fill="#000" textLength="34.00" lengthAdjust="spacingAndGlyphs" stroke="#000" stroke-width="0.12">Sw Model</text>
<path d="M251.9,44.4 L256.1,44.4 L254.0,46.6 Z" stroke="none" fill="#101010" stroke-width="1"/>
<text x="451.00" y="48.00" font-size="8.5" fill="#000" textLength="29.50" lengthAdjust="spacingAndGlyphs" stroke="#000" stroke-width="0.12">Mapping</text>
<path d="M483.9,44.4 L488.1,44.4 L486.0,46.6 Z" stroke="none" fill="#101010" stroke-width="1"/>
<text x="506.00" y="48.00" font-size="8.5" fill="#000" textLength="35.60" lengthAdjust="spacingAndGlyphs" stroke="#000" stroke-width="0.12">GridforSim</text>
<path d="M545.4,44.4 L549.6,44.4 L547.5,46.6 Z" stroke="none" fill="#101010" stroke-width="1"/>
<text x="567.00" y="48.00" font-size="8.5" fill="#000" textLength="45.90" lengthAdjust="spacingAndGlyphs" stroke="#000" stroke-width="0.12">LatLngtoUTM</text>
<path d="M616.7,44.4 L620.9,44.4 L618.8,46.6 Z" stroke="none" fill="#101010" stroke-width="1"/>
<line x1="59.20" y1="17.40" x2="59.20" y2="32.20" stroke="#8a8a8a" stroke-width="0.9"/>
<line x1="60.10" y1="17.40" x2="60.10" y2="32.20" stroke="#f0f0f0" stroke-width="0.9"/>
<line x1="115.00" y1="17.40" x2="115.00" y2="32.20" stroke="#8a8a8a" stroke-width="0.9"/>
<line x1="115.90" y1="17.40" x2="115.90" y2="32.20" stroke="#f0f0f0" stroke-width="0.9"/>
<line x1="190.20" y1="17.40" x2="190.20" y2="32.20" stroke="#8a8a8a" stroke-width="0.9"/>
<line x1="191.10" y1="17.40" x2="191.10" y2="32.20" stroke="#f0f0f0" stroke-width="0.9"/>
<line x1="244.40" y1="17.40" x2="244.40" y2="32.20" stroke="#8a8a8a" stroke-width="0.9"/>
<line x1="245.30" y1="17.40" x2="245.30" y2="32.20" stroke="#f0f0f0" stroke-width="0.9"/>
<line x1="284.80" y1="17.40" x2="284.80" y2="32.20" stroke="#8a8a8a" stroke-width="0.9"/>
<line x1="285.70" y1="17.40" x2="285.70" y2="32.20" stroke="#f0f0f0" stroke-width="0.9"/>
<line x1="358.20" y1="17.40" x2="358.20" y2="32.20" stroke="#8a8a8a" stroke-width="0.9"/>
<line x1="359.10" y1="17.40" x2="359.10" y2="32.20" stroke="#f0f0f0" stroke-width="0.9"/>
<line x1="414.30" y1="17.40" x2="414.30" y2="32.20" stroke="#8a8a8a" stroke-width="0.9"/>
<line x1="415.20" y1="17.40" x2="415.20" y2="32.20" stroke="#f0f0f0" stroke-width="0.9"/>
<line x1="458.40" y1="17.40" x2="458.40" y2="32.20" stroke="#8a8a8a" stroke-width="0.9"/>
<line x1="459.30" y1="17.40" x2="459.30" y2="32.20" stroke="#f0f0f0" stroke-width="0.9"/>
<line x1="24.60" y1="38.20" x2="24.60" y2="51.40" stroke="#8a8a8a" stroke-width="0.9"/>
<line x1="25.50" y1="38.20" x2="25.50" y2="51.40" stroke="#f0f0f0" stroke-width="0.9"/>
<line x1="129.00" y1="38.20" x2="129.00" y2="51.40" stroke="#8a8a8a" stroke-width="0.9"/>
<line x1="129.90" y1="38.20" x2="129.90" y2="51.40" stroke="#f0f0f0" stroke-width="0.9"/>
<line x1="209.40" y1="38.20" x2="209.40" y2="51.40" stroke="#8a8a8a" stroke-width="0.9"/>
<line x1="210.30" y1="38.20" x2="210.30" y2="51.40" stroke="#f0f0f0" stroke-width="0.9"/>
<line x1="262.60" y1="38.20" x2="262.60" y2="51.40" stroke="#8a8a8a" stroke-width="0.9"/>
<line x1="263.50" y1="38.20" x2="263.50" y2="51.40" stroke="#f0f0f0" stroke-width="0.9"/>
<line x1="388.60" y1="38.20" x2="388.60" y2="51.40" stroke="#8a8a8a" stroke-width="0.9"/>
<line x1="389.50" y1="38.20" x2="389.50" y2="51.40" stroke="#f0f0f0" stroke-width="0.9"/>
<line x1="444.40" y1="38.20" x2="444.40" y2="51.40" stroke="#8a8a8a" stroke-width="0.9"/>
<line x1="445.30" y1="38.20" x2="445.30" y2="51.40" stroke="#f0f0f0" stroke-width="0.9"/>
<path d="M8.3,20 H14 L16.8,22.6 V30 H8.3 Z" stroke="#202020" fill="#f6f6f6" stroke-width="0.9"/>
<path d="M14,20 V22.6 H16.8" stroke="#202020" fill="none" stroke-width="0.6"/>
<path d="M24.4,29.8 V22.2 H27.6 L28.6,23.4 H33.2 V25" stroke="#202000" fill="#909010" stroke-width="0.9"/>
<path d="M24.4,29.8 L27,25 H36.4 L33.4,29.8 Z" stroke="#202000" fill="#e0d838" stroke-width="0.9"/>
<path d="M31.5,21.6 q2.5,-1.6 4,0.6 l0.8,-1 v2.4 h-2.4" stroke="#202020" fill="none" stroke-width="0.7"/>
<rect x="43.20" y="20.60" width="9.80" height="9.80" fill="#606020" stroke="#101010" stroke-width="0.9"/>
<rect x="45.00" y="20.80" width="6.00" height="3.80" fill="#e8e8e8"/>
<rect x="45.40" y="26.40" width="5.40" height="4.00" fill="#202020"/>
<rect x="46.20" y="27.00" width="1.60" height="2.80" fill="#d0d0d0"/>
<path d="M65.8,24 L67.4,20.6 H73 L71.6,24 Z" stroke="#202020" fill="#fafafa" stroke-width="0.7"/>
<rect x="64.00" y="24.00" width="11.00" height="4.40" fill="#d8d8d8" stroke="#202020" stroke-width="0.8"/>
<rect x="65.60" y="28.20" width="7.80" height="2.00" fill="#f0f0f0" stroke="#202020" stroke-width="0.6"/>
<rect x="72.00" y="25.20" width="1.40" height="1.00" fill="#e0e000"/>
<path d="M81,20.4 H87.4 L89.4,22.4 V30.4 H81 Z" stroke="#202020" fill="#fafafa" stroke-width="0.8"/>
<circle cx="87" cy="26.4" r="2.7" fill="#c8ecf4" stroke="#202020" stroke-width="0.9"/>
<line x1="89.00" y1="28.40" x2="92.00" y2="31.00" stroke="#202020" stroke-width="1.4"/>
<text x="99.40" y="23.40" font-size="4.6" fill="#202020" font-weight="bold" textLength="10.00" lengthAdjust="spacingAndGlyphs">ABC</text>
<path d="M101.4,26.6 L104.2,30 L109.8,22.6" stroke="#2030c0" fill="none" stroke-width="1.5"/>
<path d="M123.4,20.2 L126.8,27 M128,20.2 L124.6,27" stroke="#202020" fill="none" stroke-width="0.9"/>
<circle cx="123.8" cy="28.6" r="1.6" fill="none" stroke="#2030a0" stroke-width="1"/><circle cx="127.6" cy="28.6" r="1.6" fill="none" stroke="#2030a0" stroke-width="1"/>
<path d="M137.2,20.6 H142 L143.8,22.4 V27.4 H137.2 Z" stroke="#202020" fill="#fafafa" stroke-width="0.8"/>
<path d="M142,23.6 H146.8 L148.8,25.6 V30.6 H142 Z" stroke="#202060" fill="#fafafa" stroke-width="0.8"/>
<line x1="143.40" y1="26.60" x2="147.00" y2="26.60" stroke="#3040a0" stroke-width="0.6"/>
<line x1="143.40" y1="28.40" x2="147.00" y2="28.40" stroke="#3040a0" stroke-width="0.6"/>
<rect x="155.40" y="21.60" width="9.00" height="8.60" fill="#908040" stroke="#202020" stroke-width="0.8"/>
<rect x="158.00" y="20.40" width="3.80" height="2.20" fill="#d0d0d0" stroke="#202020" stroke-width="0.6"/>
<path d="M160,24.6 H165 L166.8,26.4 V30.8 H160 Z" stroke="#202060" fill="#fafafa" stroke-width="0.8"/>
<path d="M180.6,20.6 L184.2,22.8 L182.8,25 L179.2,22.8 Z" stroke="#101010" fill="#303080" stroke-width="0.7"/>
<path d="M179.4,23.4 L182.2,25.2 L178,30.4 L173.2,28.6 Z" stroke="#404000" fill="#f4f4b0" stroke-width="0.8"/>
<path d="M173,30.6 h2 m1,0.2 h2" stroke="#e0e000" fill="none" stroke-width="0.9"/>
<path d="M196.4,27.4 q1,-4.6 8,-3.4 M196,23.8 v3.8 h3.8" stroke="#8a8a8a" fill="none" stroke-width="1.1"/>
<path d="M197.2,28.4 q1,-4.6 8,-3.4" stroke="#f0f0f0" fill="none" stroke-width="0.6"/>
<path d="M210.7,24.8 L214.9,24.8 L212.8,27.0 Z" stroke="none" fill="#8a8a8a" stroke-width="1"/>
<path d="M230.4,27.4 q-1,-4.6 -8,-3.4 M230.8,23.8 v3.8 h-3.8" stroke="#8a8a8a" fill="none" stroke-width="1.1"/>
<path d="M231.2,28.4 q-1,-4.6 -8,-3.4" stroke="#f0f0f0" fill="none" stroke-width="0.6"/>
<path d="M236.6,24.8 L240.8,24.8 L238.7,27.0 Z" stroke="none" fill="#8a8a8a" stroke-width="1"/>
<circle cx="254.5" cy="23.6" r="4.3" fill="#1030d0" stroke="#101850" stroke-width="0.7"/>
<path d="M253.4,20.2 q2.6,-0.8 3.2,1.2 q-0.4,1.6 -1.6,2.2 q0.6,1.8 -0.6,3 q-1.4,-1.4 -1.2,-3 q-1.6,-1.4 0.2,-3.4 Z" stroke="none" fill="#18a028" stroke-width="1"/>
<path d="M250.8,22.4 q-0.4,1.6 0.6,2.6" stroke="#18a028" fill="none" stroke-width="0.9"/>
<ellipse cx="257.2" cy="28.6" rx="4" ry="1.6" fill="#909090" stroke="#181818" stroke-width="0.9"/>
<line x1="255.60" y1="28.60" x2="258.80" y2="28.60" stroke="#181818" stroke-width="0.8"/>
<circle cx="271.4" cy="23.6" r="4.2" fill="#1030d0" stroke="#101850" stroke-width="0.7"/>
<path d="M270.4,20.2 q2.6,-0.8 3.2,1.2 q-0.4,1.6 -1.6,2.2 q0.6,1.8 -0.6,3 q-1.4,-1.4 -1.2,-3 q-1.6,-1.4 0.2,-3.4 Z" stroke="none" fill="#18a028" stroke-width="1"/>
<path d="M273.4,22.4 H279.4 M277.4,20.8 L279.6,22.4 L277.4,24" stroke="#10d8e8" fill="none" stroke-width="1.3"/>
<path d="M276.4,27.6 H270.8 M272.6,26 L270.4,27.6 L272.6,29.2" stroke="#10d8e8" fill="none" stroke-width="1.3"/>
<path d="M271.4,27.8 V30.6" stroke="#101850" fill="none" stroke-width="0.8"/>
<text x="290.80" y="28.60" font-size="10.5" fill="#000" font-weight="bold" textLength="7.60" lengthAdjust="spacingAndGlyphs" font-family="Liberation Serif">Σ</text>
<text x="307.20" y="28.80" font-size="11" fill="#101010" font-weight="bold" font-style="italic" font-family="Liberation Serif">f</text>
<text x="311.60" y="30.00" font-size="6.5" fill="#101010" font-weight="bold" font-style="italic" font-family="Liberation Serif">x</text>
<text x="324.60" y="24.60" font-size="7" fill="#2030c0" font-weight="bold">A</text>
<text x="324.80" y="30.60" font-size="7" fill="#a02020" font-weight="bold">Z</text>
<path d="M333.2,20.2 V29 M331.8,28 L333.2,30.6 L334.6,28 Z" stroke="#101010" fill="#101010" stroke-width="0.8"/>
<text x="342.20" y="24.60" font-size="7" fill="#a02020" font-weight="bold">Z</text>
<text x="342.00" y="30.60" font-size="7" fill="#2030c0" font-weight="bold">A</text>
<path d="M350.8,20.2 V29 M349.4,28 L350.8,30.6 L352.2,28 Z" stroke="#101010" fill="#101010" stroke-width="0.8"/>
<path d="M363.4,21.4 L365.4,19.8 H374.6 V28.8 L372.8,30.4 H363.4 Z" stroke="#202020" fill="#ececec" stroke-width="0.7"/>
<rect x="365.20" y="23.70" width="2.30" height="5.40" fill="#1030e0" stroke="#101010" stroke-width="0.3"/>
<rect x="368.20" y="20.30" width="2.40" height="8.80" fill="#f0f000" stroke="#101010" stroke-width="0.3"/>
<rect x="371.40" y="21.80" width="2.30" height="7.30" fill="#e81010" stroke="#101010" stroke-width="0.3"/>
<line x1="363.60" y1="29.40" x2="373.60" y2="29.40" stroke="#101010" stroke-width="0.8"/>
<path d="M389.4,19.6 q3.2,4.4 -1,8.6" stroke="#a09000" fill="none" stroke-width="1.2"/>
<circle cx="386.6" cy="23.7" r="4.3" fill="#1838d8" stroke="#101850" stroke-width="0.7"/>
<path d="M385.6,20.6 q2.6,-0.8 3,1.4 q-0.4,1.6 -1.6,2.2 q0.6,1.8 -0.6,3 q-1.4,-1.4 -1.2,-3 q-1.6,-1.6 0.4,-3.6 Z" stroke="none" fill="#18a028" stroke-width="1"/>
<path d="M383,22.6 q-0.6,1.6 0.4,2.6" stroke="#18a028" fill="none" stroke-width="0.9"/>
<path d="M384.6,28.6 h4 l1.6,1.4 v0.8 h-7.6 v-0.8 Z" stroke="#404000" fill="#b0a010" stroke-width="0.5"/>
<path d="M401.8,20.6 L403.8,19 H408.8 V22.8 L406.8,24.2 H401.8 Z" stroke="#303000" fill="#e8d820" stroke-width="0.6"/>
<path d="M398,28.2 L402.4,21.8 L403.2,28.4 Z" stroke="#000060" fill="#1020c0" stroke-width="0.7"/>
<path d="M404,26.4 L407.6,24.4 L409.4,26.4 L406.6,29 Z" stroke="#606060" fill="#f4f4f4" stroke-width="0.5"/>
<circle cx="404.8" cy="28.4" r="2.4" fill="#10e0e8" stroke="#106070" stroke-width="0.5"/>
<rect x="419.00" y="19.20" width="36.20" height="11.60" fill="#f0f0f0"/>
<line x1="419.00" y1="19.40" x2="455.00" y2="19.40" stroke="#909090" stroke-width="0.7"/>
<text x="421.20" y="28.20" font-size="8.5" fill="#000" textLength="21.00" lengthAdjust="spacingAndGlyphs">100%</text>
<rect x="447.60" y="20.40" width="6.80" height="9.60" fill="#c0c0c0"/>
<line x1="447.60" y1="20.80" x2="454.40" y2="20.80" stroke="#f4f4f4" stroke-width="0.8"/>
<line x1="448.00" y1="20.40" x2="448.00" y2="30.00" stroke="#f4f4f4" stroke-width="0.8"/>
<line x1="447.60" y1="29.60" x2="454.40" y2="29.60" stroke="#505050" stroke-width="0.9"/>
<line x1="454.00" y1="20.40" x2="454.00" y2="30.00" stroke="#505050" stroke-width="0.9"/>
<path d="M448.9,24.6 L453.1,24.6 L451.0,26.8 Z" stroke="none" fill="#101010" stroke-width="1"/>
<path d="M465,19.4 H474.8 V29 H473 L473.2,30.8 L470.8,29 H465 Z" stroke="#202020" fill="#fafae4" stroke-width="0.8"/>
<text x="467.40" y="27.60" font-size="9" fill="#1828c8" font-weight="bold" textLength="4.80" lengthAdjust="spacingAndGlyphs" stroke="#1828c8" stroke-width="0.3">?</text>
<text x="10.20" y="49.60" font-size="13.5" fill="#000098" font-weight="bold" textLength="6.20" lengthAdjust="spacingAndGlyphs" font-family="Liberation Serif">?</text>
<path d="M78.4,39.3 H84.2 L86.8,41.8 V48.9 H78.4 Z" stroke="#303030" fill="#f4f4f4" stroke-width="0.8"/>
<text x="81.40" y="47.00" font-size="6.8" fill="#0000f0" font-weight="bold" font-family="Liberation Serif" stroke="#0000f0" stroke-width="0.3">P</text>
<text x="85.40" y="47.60" font-size="7.6" fill="#0000f0" font-weight="bold" font-family="Liberation Serif" font-style="italic" stroke="#0000f0" stroke-width="0.3">f</text>
<rect x="94.20" y="40.40" width="6.00" height="8.40" fill="#505050" stroke="#202020" stroke-width="0.6"/>
<line x1="94.20" y1="43.00" x2="100.00" y2="43.00" stroke="#c0c0c0" stroke-width="0.6"/>
<line x1="94.20" y1="45.60" x2="100.00" y2="45.60" stroke="#c0c0c0" stroke-width="0.6"/>
<path d="M96.8,39.3 H101.4 L103.9,41.8 V48.9 H96.8 Z" stroke="#303030" fill="#f4f4f4" stroke-width="0.8"/>
<text x="98.00" y="47.00" font-size="6.8" fill="#0000f0" font-weight="bold" font-family="Liberation Serif" stroke="#0000f0" stroke-width="0.3">P</text>
<text x="102.00" y="47.60" font-size="7.6" fill="#0000f0" font-weight="bold" font-family="Liberation Serif" font-style="italic" stroke="#0000f0" stroke-width="0.3">f</text>
<text x="112.60" y="43.90" font-size="6.6" fill="#000" font-weight="bold" textLength="8.20" lengthAdjust="spacingAndGlyphs" stroke="#000" stroke-width="0.25">1.1</text>
<path d="M113,46.2 H116.4 M115.4,44.9 L117.6,46.3 L115.4,47.7 Z" stroke="#1030e0" fill="#1030e0" stroke-width="1.0"/>
<text x="118.60" y="49.70" font-size="7" fill="#000" font-weight="bold" stroke="#000" stroke-width="0.25">2</text>
<path d="M270,40 V50.4 H278.4" stroke="#404040" fill="none" stroke-width="0.9"/>
<path d="M277,40.4 q-5,2 -2,4.4 q3,2.4 -2,5" stroke="#20c0d0" fill="none" stroke-width="1.1"/>
<rect x="285.40" y="39.20" width="11.20" height="10.80" fill="#c8c0c8" stroke="#202020" stroke-width="0.8"/>
<path d="M286.6,40.6 L294.6,48.6 M288.8,40.4 L296,47.4 M286,42.6 L292.6,49.4" stroke="#e828d0" fill="none" stroke-width="1.0"/>
<text x="301.80" y="48.20" font-size="10.8" fill="#000" textLength="5.00" lengthAdjust="spacingAndGlyphs">H</text>
<text x="307.00" y="48.40" font-size="8.2" fill="#000" textLength="7.00" lengthAdjust="spacingAndGlyphs">gh</text>
<text x="319.80" y="48.40" font-size="11.4" fill="#000" font-weight="bold" textLength="6.80" lengthAdjust="spacingAndGlyphs" font-family="Liberation Serif">Φ</text>
<text x="326.80" y="49.60" font-size="8.6" fill="#000" font-weight="bold" textLength="4.60" lengthAdjust="spacingAndGlyphs">2</text>
<path d="M336.6,50.4 V43 L340,41 L343.4,40.8 L348,43.6 V50.4 Z" stroke="#101010" fill="#e02020" stroke-width="0.4"/>
<path d="M336.6,50.4 V43.4 L340.4,47.8 L348,46.6 V50.4 Z" stroke="none" fill="#1030e0" stroke-width="1"/>
<path d="M338,45 L342.6,41.8 L347.4,44.4 L342.4,48.2 Z" stroke="none" fill="#20c030" stroke-width="1"/>
<text x="354.60" y="49.80" font-size="12" fill="#101010" font-weight="bold" textLength="10.60" lengthAdjust="spacingAndGlyphs">%</text>
<path d="M374,40 V50.4 H382.4" stroke="#404040" fill="none" stroke-width="0.9"/>
<path d="M381.4,40.6 H378 V44 H380.6 V47.4 H377.4 V50" stroke="#20c0d0" fill="none" stroke-width="1.1"/>
<path d="M394.6,40.4 v10 M393.4,42.4 h2.4 M393.4,45.4 h2.4 M393.4,48.4 h2.4" stroke="#101010" fill="none" stroke-width="0.8"/>
<path d="M398,41.4 V49.6 M398,45.4 H401.4 M401.2,42.2 L405.6,45.4 L401.2,48.6 Z" stroke="#1030d0" fill="#1030d0" stroke-width="1.1"/>
<circle cx="415.8" cy="43.8" r="3.6" fill="#e8f0f8" stroke="#101010" stroke-width="1"/>
<line x1="418.40" y1="46.60" x2="422.00" y2="50.60" stroke="#1030a0" stroke-width="1.6"/>
<line x1="413.80" y1="43.80" x2="417.80" y2="43.80" stroke="#101010" stroke-width="0.9"/>
<line x1="415.80" y1="41.80" x2="415.80" y2="45.80" stroke="#101010" stroke-width="0.9"/>
<circle cx="434" cy="43.8" r="3.6" fill="#e8f0f8" stroke="#101010" stroke-width="1"/>
<line x1="436.60" y1="46.60" x2="440.20" y2="50.60" stroke="#1030a0" stroke-width="1.6"/>
<line x1="432.00" y1="43.80" x2="436.00" y2="43.80" stroke="#101010" stroke-width="0.9"/>
<rect x="0.00" y="54.40" width="770.00" height="13.80" fill="#f0f0f0"/>
<rect x="91.00" y="54.40" width="43.40" height="13.80" fill="#c0c0c0"/>
<text x="30.40" y="65.00" font-size="8.5" fill="#000" textLength="14.30" lengthAdjust="spacingAndGlyphs">AT2</text>
<rect x="80.60" y="55.60" width="9.80" height="11.60" fill="#c0c0c0"/>
<line x1="80.60" y1="56.00" x2="90.40" y2="56.00" stroke="#f4f4f4" stroke-width="0.8"/>
<line x1="81.00" y1="55.60" x2="81.00" y2="67.20" stroke="#f4f4f4" stroke-width="0.8"/>
<line x1="80.60" y1="66.80" x2="90.40" y2="66.80" stroke="#505050" stroke-width="0.9"/>
<line x1="90.00" y1="55.60" x2="90.00" y2="67.20" stroke="#505050" stroke-width="0.9"/>
<path d="M83.3,60.4 L87.5,60.4 L85.4,62.6 Z" stroke="none" fill="#101010" stroke-width="1"/>
<line x1="91.60" y1="55.00" x2="91.60" y2="68.00" stroke="#f0f0f0" stroke-width="0.8"/>
<text x="124.40" y="65.00" font-size="9" fill="#101010" font-weight="bold" textLength="6.00" lengthAdjust="spacingAndGlyphs">=</text>
<line x1="134.20" y1="55.00" x2="134.20" y2="68.00" stroke="#8a8a8a" stroke-width="0.9"/>
</svg>
</body></html>
